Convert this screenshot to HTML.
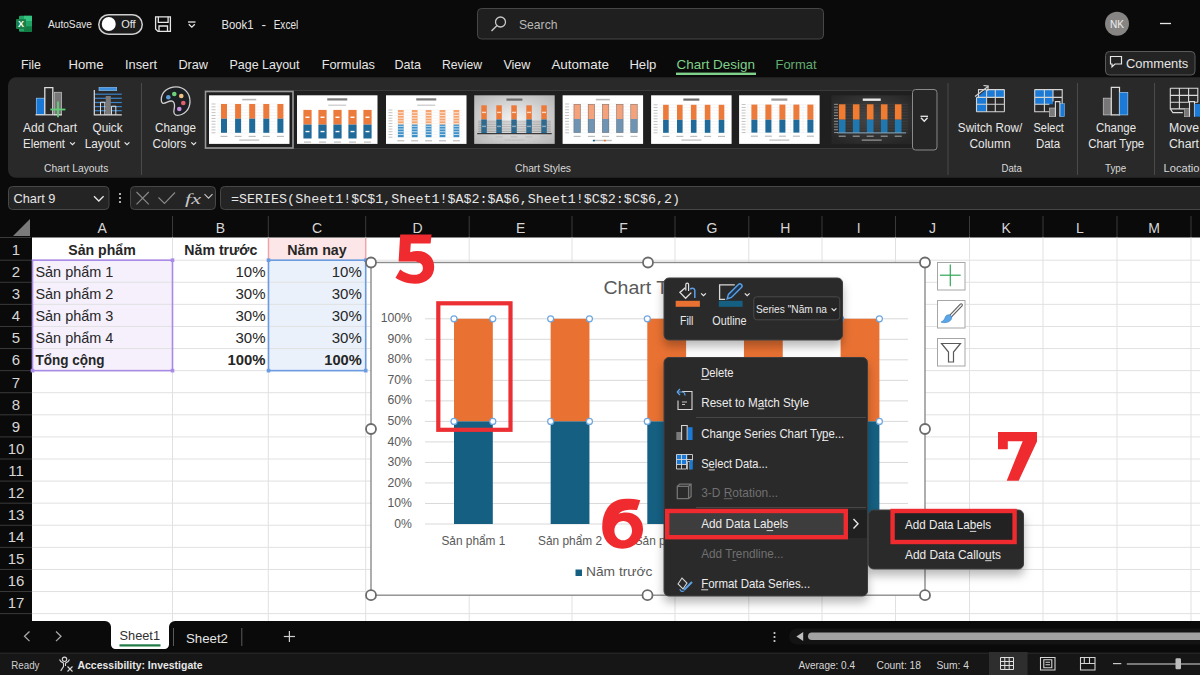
<!DOCTYPE html>
<html><head><meta charset="utf-8"><title>Excel</title>
<style>html,body{margin:0;padding:0;width:1200px;height:675px;overflow:hidden;background:#0a0a0a}svg{display:block;font-family:"Liberation Sans",sans-serif}</style>
</head><body>
<svg width="1200" height="675" viewBox="0 0 1200 675">
<defs>
<radialGradient id="gd" cx="0.5" cy="0.45" r="0.65"><stop offset="0" stop-color="#454545"/><stop offset="1" stop-color="#262626"/></radialGradient>
<radialGradient id="gg" cx="0.5" cy="0.5" r="0.7"><stop offset="0" stop-color="#f4f4f4"/><stop offset="1" stop-color="#b4b4b4"/></radialGradient>
<filter id="sh" x="-20%" y="-20%" width="140%" height="150%"><feDropShadow dx="0" dy="6" stdDeviation="5" flood-color="#000" flood-opacity="0.28"/></filter>
</defs>
<rect x="0" y="0" width="1200" height="675" fill="#0a0a0a"/>
<rect x="19" y="15.8" width="13" height="16" fill="#21a366" rx="1.2"/>
<rect x="24" y="15.8" width="8" height="5.3" fill="#33c481"/>
<rect x="24" y="21.1" width="8" height="5.3" fill="#21a366"/>
<rect x="24" y="26.4" width="8" height="5.4" fill="#107c41"/>
<rect x="16" y="18.9" width="10" height="10" fill="#1b8048" rx="1"/>
<text x="21" y="27.2" font-size="9.5" fill="#ffffff" font-weight="bold" text-anchor="middle" textLength="6" lengthAdjust="spacingAndGlyphs">X</text>
<text x="48" y="28" font-size="10" fill="#e6e6e6" textLength="44" lengthAdjust="spacingAndGlyphs">AutoSave</text>
<rect x="98.75" y="14.75" width="43.5" height="19.5" fill="#1a1a1a" rx="9.75" stroke="#cfcfcf" stroke-width="1.5"/>
<circle cx="108.75" cy="24" r="7" fill="#ffffff"/>
<text x="121.2" y="28" font-size="11" fill="#e6e6e6" textLength="14.5" lengthAdjust="spacingAndGlyphs">Off</text>
<path d="M155.6,16.8 h14.8 v14.6 h-12.4 l-2.4,-2.4 z" fill="none" stroke="#e6e6e6" stroke-width="1.3"/>
<path d="M158.3,16.8 v5.6 h9.8 v-5.6" fill="none" stroke="#e6e6e6" stroke-width="1.3"/>
<path d="M159,31.4 v-5.4 h8.5 v5.4" fill="none" stroke="#e6e6e6" stroke-width="1.3"/>
<line x1="188" y1="22" x2="195.5" y2="22" stroke="#e6e6e6" stroke-width="1.3"/>
<path d="M188.8,24.3 l3,2.9 l3,-2.9" fill="none" stroke="#e6e6e6" stroke-width="1.3"/>
<text x="221.5" y="28.7" font-size="12.5" fill="#e6e6e6" textLength="32" lengthAdjust="spacingAndGlyphs">Book1</text>
<text x="261.5" y="28.7" font-size="12.5" fill="#e6e6e6" textLength="4.5" lengthAdjust="spacingAndGlyphs">-</text>
<text x="273.7" y="28.7" font-size="12.5" fill="#e6e6e6" textLength="24.5" lengthAdjust="spacingAndGlyphs">Excel</text>
<rect x="477.5" y="8.5" width="346" height="30.5" fill="#1f1f1f" rx="4" stroke="#474747" stroke-width="1"/>
<circle cx="500.5" cy="22" r="5" fill="none" stroke="#c8c8c8" stroke-width="1.3"/>
<line x1="496.8" y1="25.8" x2="491.5" y2="31" stroke="#c8c8c8" stroke-width="1.4"/>
<text x="519" y="29.3" font-size="13" fill="#b8b8b8" textLength="38.5" lengthAdjust="spacingAndGlyphs">Search</text>
<circle cx="1117" cy="23.7" r="12" fill="#878584"/>
<text x="1117" y="27.6" font-size="10" fill="#eeeeee" text-anchor="middle" textLength="14" lengthAdjust="spacingAndGlyphs">NK</text>
<line x1="1160" y1="23.5" x2="1171" y2="23.5" stroke="#e6e6e6" stroke-width="1.3"/>
<text x="21" y="68.8" font-size="13.5" fill="#e6e6e6" textLength="20" lengthAdjust="spacingAndGlyphs">File</text>
<text x="68.6" y="68.8" font-size="13.5" fill="#e6e6e6" textLength="35" lengthAdjust="spacingAndGlyphs">Home</text>
<text x="125" y="68.8" font-size="13.5" fill="#e6e6e6" textLength="32" lengthAdjust="spacingAndGlyphs">Insert</text>
<text x="178.4" y="68.8" font-size="13.5" fill="#e6e6e6" textLength="29.6" lengthAdjust="spacingAndGlyphs">Draw</text>
<text x="229.5" y="68.8" font-size="13.5" fill="#e6e6e6" textLength="70" lengthAdjust="spacingAndGlyphs">Page Layout</text>
<text x="321.7" y="68.8" font-size="13.5" fill="#e6e6e6" textLength="53.3" lengthAdjust="spacingAndGlyphs">Formulas</text>
<text x="394.5" y="68.8" font-size="13.5" fill="#e6e6e6" textLength="26.5" lengthAdjust="spacingAndGlyphs">Data</text>
<text x="442" y="68.8" font-size="13.5" fill="#e6e6e6" textLength="40" lengthAdjust="spacingAndGlyphs">Review</text>
<text x="503.4" y="68.8" font-size="13.5" fill="#e6e6e6" textLength="27" lengthAdjust="spacingAndGlyphs">View</text>
<text x="551.4" y="68.8" font-size="13.5" fill="#e6e6e6" textLength="57.6" lengthAdjust="spacingAndGlyphs">Automate</text>
<text x="629.4" y="68.8" font-size="13.5" fill="#e6e6e6" textLength="27" lengthAdjust="spacingAndGlyphs">Help</text>
<text x="676.5" y="68.8" font-size="13.5" fill="#7fd18b" textLength="78.5" lengthAdjust="spacingAndGlyphs">Chart Design</text>
<rect x="676" y="72.6" width="80" height="2.4" fill="#7fd18b"/>
<text x="775.5" y="68.8" font-size="13.5" fill="#62ad71" textLength="41" lengthAdjust="spacingAndGlyphs">Format</text>
<rect x="1105.5" y="51.5" width="89.5" height="23.5" fill="#232323" rx="4" stroke="#5a5a5a" stroke-width="1"/>
<path d="M1110.5,56.5 h11 v7.5 h-6.5 l-3,2.8 v-2.8 h-1.5 z" fill="none" stroke="#e6e6e6" stroke-width="1.2"/>
<text x="1126" y="68" font-size="13" fill="#e6e6e6" textLength="62.3" lengthAdjust="spacingAndGlyphs">Comments</text>
<rect x="8" y="77.3" width="1230" height="100.5" fill="#292929" rx="8"/>
<rect x="36.3" y="98.2" width="8.2" height="16.5" fill="#1778d8" stroke="#9cc8f0" stroke-width="0.7"/>
<path d="M44.8,114.8 v-27.2 h8 v27.2" fill="none" stroke="#dcdcdc" stroke-width="1.3"/>
<rect x="54.3" y="92.3" width="7.2" height="22.5" fill="#777777" stroke="#bdbdbd" stroke-width="0.8"/>
<line x1="35.5" y1="114.8" x2="62" y2="114.8" stroke="#dcdcdc" stroke-width="1.2"/>
<line x1="50.3" y1="109.5" x2="65.4" y2="109.5" stroke="#5fcf75" stroke-width="1.8"/>
<line x1="58" y1="101.6" x2="58" y2="117.2" stroke="#5fcf75" stroke-width="1.8"/>
<text x="50" y="132" font-size="12.5" fill="#e8e8e8" text-anchor="middle" textLength="54" lengthAdjust="spacingAndGlyphs">Add Chart</text>
<text x="23" y="148" font-size="12.5" fill="#e8e8e8" textLength="42" lengthAdjust="spacingAndGlyphs">Element</text>
<path d="M70.1,142.3 l2.4,2.4 l2.4,-2.4" fill="none" stroke="#e8e8e8" stroke-width="1.2"/>
<rect x="99" y="87.3" width="17.7" height="3.4" fill="#3f8fe0" stroke="#8cc0f0" stroke-width="0.6"/>
<line x1="94.3" y1="94.2" x2="121.8" y2="94.2" stroke="#3d85cc" stroke-width="1.2"/>
<line x1="94.3" y1="98.3" x2="121.8" y2="98.3" stroke="#3d85cc" stroke-width="1.2"/>
<line x1="94.3" y1="102.5" x2="121.8" y2="102.5" stroke="#3d85cc" stroke-width="1.2"/>
<line x1="94.3" y1="106.6" x2="121.8" y2="106.6" stroke="#3d85cc" stroke-width="1.2"/>
<line x1="94.3" y1="110.7" x2="121.8" y2="110.7" stroke="#3d85cc" stroke-width="1.2"/>
<rect x="105.7" y="96" width="5.1" height="18.9" fill="#7a7a7a"/>
<path d="M100.5,114.9 v-12.7 h4.3 v12.7 M111.5,114.9 v-8.7 h4.3 v8.7" fill="none" stroke="#dcdcdc" stroke-width="1"/>
<path d="M94.3,90 v24.9 h27.5" fill="none" stroke="#dcdcdc" stroke-width="1.2"/>
<text x="107.5" y="132" font-size="12.5" fill="#e8e8e8" text-anchor="middle" textLength="30" lengthAdjust="spacingAndGlyphs">Quick</text>
<text x="84.7" y="148" font-size="12.5" fill="#e8e8e8" textLength="35.3" lengthAdjust="spacingAndGlyphs">Layout</text>
<path d="M124.6,142.3 l2.4,2.4 l2.4,-2.4" fill="none" stroke="#e8e8e8" stroke-width="1.2"/>
<text x="76.2" y="171.5" font-size="11" fill="#d8d8d8" text-anchor="middle" textLength="64.3" lengthAdjust="spacingAndGlyphs">Chart Layouts</text>
<line x1="141.5" y1="83" x2="141.5" y2="175" stroke="#4a4a4a" stroke-width="1"/>
<path d="M176,86.8 C184.5,86.8 190,93.5 190,101.5 C190,109.5 184,115.3 177.5,115.3 C174.5,115.3 173.3,113 174,110 C174.8,106.5 175.5,103.5 173,101.5 C170,99.5 166.5,103.3 163.5,103.3 C161.8,103.3 161.3,101.5 161.3,99.5 C161.3,92.5 167.5,86.8 176,86.8 Z" fill="#1c1f24" stroke="#d0d0d0" stroke-width="1.3"/>
<circle cx="168.3" cy="97.3" r="2.3" fill="#5b9bd5"/>
<circle cx="174.3" cy="94" r="2.3" fill="#6fd07a"/>
<circle cx="181.3" cy="96" r="2.3" fill="#f0c080"/>
<circle cx="183.3" cy="103" r="2.3" fill="#e06070"/>
<circle cx="179.3" cy="109" r="2.3" fill="#c890e0"/>
<text x="175.5" y="132" font-size="12.5" fill="#e8e8e8" text-anchor="middle" textLength="40.8" lengthAdjust="spacingAndGlyphs">Change</text>
<text x="152.5" y="148" font-size="12.5" fill="#e8e8e8" textLength="33.8" lengthAdjust="spacingAndGlyphs">Colors</text>
<path d="M191.29999999999998,142.3 l2.4,2.4 l2.4,-2.4" fill="none" stroke="#e8e8e8" stroke-width="1.2"/>
<text x="543" y="171.5" font-size="11" fill="#d8d8d8" text-anchor="middle" textLength="56" lengthAdjust="spacingAndGlyphs">Chart Styles</text>
<line x1="948" y1="83" x2="948" y2="175" stroke="#4a4a4a" stroke-width="1"/>
<rect x="204.5" y="90.5" width="733" height="58" fill="#1f1f1f"/>
<line x1="204.5" y1="90.5" x2="912" y2="90.5" stroke="#3a3a3a" stroke-width="1"/>
<line x1="204.5" y1="148.5" x2="912" y2="148.5" stroke="#3a3a3a" stroke-width="1"/>
<rect x="209" y="95.3" width="80.5" height="48.6" fill="#ffffff"/>
<rect x="242.25" y="98.8" width="14" height="1.6" fill="#b8b8b8"/>
<line x1="217" y1="104.0" x2="285.5" y2="104.0" stroke="#ececec" stroke-width="0.5"/>
<rect x="211.5" y="103.55" width="4" height="0.9" fill="#bdbdbd"/>
<line x1="217" y1="106.88" x2="285.5" y2="106.88" stroke="#ececec" stroke-width="0.5"/>
<rect x="211.5" y="106.42999999999999" width="4" height="0.9" fill="#bdbdbd"/>
<line x1="217" y1="109.76" x2="285.5" y2="109.76" stroke="#ececec" stroke-width="0.5"/>
<rect x="211.5" y="109.31" width="4" height="0.9" fill="#bdbdbd"/>
<line x1="217" y1="112.64" x2="285.5" y2="112.64" stroke="#ececec" stroke-width="0.5"/>
<rect x="211.5" y="112.19" width="4" height="0.9" fill="#bdbdbd"/>
<line x1="217" y1="115.52000000000001" x2="285.5" y2="115.52000000000001" stroke="#ececec" stroke-width="0.5"/>
<rect x="211.5" y="115.07000000000001" width="4" height="0.9" fill="#bdbdbd"/>
<line x1="217" y1="118.4" x2="285.5" y2="118.4" stroke="#ececec" stroke-width="0.5"/>
<rect x="211.5" y="117.95" width="4" height="0.9" fill="#bdbdbd"/>
<line x1="217" y1="121.28" x2="285.5" y2="121.28" stroke="#ececec" stroke-width="0.5"/>
<rect x="211.5" y="120.83" width="4" height="0.9" fill="#bdbdbd"/>
<line x1="217" y1="124.16000000000001" x2="285.5" y2="124.16000000000001" stroke="#ececec" stroke-width="0.5"/>
<rect x="211.5" y="123.71000000000001" width="4" height="0.9" fill="#bdbdbd"/>
<line x1="217" y1="127.04" x2="285.5" y2="127.04" stroke="#ececec" stroke-width="0.5"/>
<rect x="211.5" y="126.59" width="4" height="0.9" fill="#bdbdbd"/>
<line x1="217" y1="129.92000000000002" x2="285.5" y2="129.92000000000002" stroke="#ececec" stroke-width="0.5"/>
<rect x="211.5" y="129.47000000000003" width="4" height="0.9" fill="#bdbdbd"/>
<line x1="217" y1="132.8" x2="285.5" y2="132.8" stroke="#ececec" stroke-width="0.5"/>
<rect x="211.5" y="132.35000000000002" width="4" height="0.9" fill="#bdbdbd"/>
<rect x="221.0" y="104" width="6" height="14.700000000000003" fill="#ec7a3a"/>
<rect x="221.0" y="118.7" width="6" height="14.100000000000009" fill="#1f6a98"/>
<rect x="220.5" y="135.8" width="7" height="1.2" fill="#bdbdbd"/>
<rect x="235.1" y="104" width="6" height="14.700000000000003" fill="#ec7a3a"/>
<rect x="235.1" y="118.7" width="6" height="14.100000000000009" fill="#1f6a98"/>
<rect x="234.6" y="135.8" width="7" height="1.2" fill="#bdbdbd"/>
<rect x="249.2" y="104" width="6" height="14.700000000000003" fill="#ec7a3a"/>
<rect x="249.2" y="118.7" width="6" height="14.100000000000009" fill="#1f6a98"/>
<rect x="248.7" y="135.8" width="7" height="1.2" fill="#bdbdbd"/>
<rect x="263.3" y="104" width="6" height="14.700000000000003" fill="#ec7a3a"/>
<rect x="263.3" y="118.7" width="6" height="14.100000000000009" fill="#1f6a98"/>
<rect x="262.8" y="135.8" width="7" height="1.2" fill="#bdbdbd"/>
<rect x="277.4" y="104" width="6" height="14.700000000000003" fill="#ec7a3a"/>
<rect x="277.4" y="118.7" width="6" height="14.100000000000009" fill="#1f6a98"/>
<rect x="276.9" y="135.8" width="7" height="1.2" fill="#bdbdbd"/>
<rect x="239.25" y="139.5" width="20" height="1.2" fill="#bdbdbd"/>
<rect x="297" y="95.3" width="80.5" height="48.6" fill="#ffffff"/>
<rect x="327.25" y="98.3" width="20" height="2.2" fill="#7a7a7a"/>
<rect x="328.25" y="104.6" width="18" height="1.2" fill="#c8c8c8"/>
<rect x="303.4" y="109.9" width="8.2" height="14.699999999999989" fill="#ec7a3a"/>
<rect x="303.4" y="124.6" width="8.2" height="13.900000000000006" fill="#1f6a98"/>
<rect x="305.5" y="116.55" width="4" height="1.4" fill="#ffffff"/>
<rect x="305.5" y="130.85000000000002" width="4" height="1.4" fill="#ffffff"/>
<rect x="304.0" y="141.5" width="7" height="1.2" fill="#bdbdbd"/>
<rect x="318.4" y="109.9" width="8.2" height="14.699999999999989" fill="#ec7a3a"/>
<rect x="318.4" y="124.6" width="8.2" height="13.900000000000006" fill="#1f6a98"/>
<rect x="320.5" y="116.55" width="4" height="1.4" fill="#ffffff"/>
<rect x="320.5" y="130.85000000000002" width="4" height="1.4" fill="#ffffff"/>
<rect x="319.0" y="141.5" width="7" height="1.2" fill="#bdbdbd"/>
<rect x="333.4" y="109.9" width="8.2" height="14.699999999999989" fill="#ec7a3a"/>
<rect x="333.4" y="124.6" width="8.2" height="13.900000000000006" fill="#1f6a98"/>
<rect x="335.5" y="116.55" width="4" height="1.4" fill="#ffffff"/>
<rect x="335.5" y="130.85000000000002" width="4" height="1.4" fill="#ffffff"/>
<rect x="334.0" y="141.5" width="7" height="1.2" fill="#bdbdbd"/>
<rect x="348.4" y="109.9" width="8.2" height="14.699999999999989" fill="#ec7a3a"/>
<rect x="348.4" y="124.6" width="8.2" height="13.900000000000006" fill="#1f6a98"/>
<rect x="350.5" y="116.55" width="4" height="1.4" fill="#ffffff"/>
<rect x="350.5" y="130.85000000000002" width="4" height="1.4" fill="#ffffff"/>
<rect x="349.0" y="141.5" width="7" height="1.2" fill="#bdbdbd"/>
<rect x="363.4" y="109.9" width="8.2" height="14.699999999999989" fill="#ec7a3a"/>
<rect x="363.4" y="124.6" width="8.2" height="13.900000000000006" fill="#1f6a98"/>
<rect x="365.5" y="116.55" width="4" height="1.4" fill="#ffffff"/>
<rect x="365.5" y="130.85000000000002" width="4" height="1.4" fill="#ffffff"/>
<rect x="364.0" y="141.5" width="7" height="1.2" fill="#bdbdbd"/>
<rect x="386" y="95.3" width="80.5" height="48.6" fill="#ffffff"/>
<rect x="416.25" y="98.3" width="20" height="2.2" fill="#7a7a7a"/>
<rect x="417.25" y="104.6" width="18" height="1.2" fill="#c8c8c8"/>
<line x1="394" y1="110.0" x2="462.5" y2="110.0" stroke="#ececec" stroke-width="0.5"/>
<rect x="388.5" y="109.55" width="4" height="0.9" fill="#bdbdbd"/>
<line x1="394" y1="112.72" x2="462.5" y2="112.72" stroke="#ececec" stroke-width="0.5"/>
<rect x="388.5" y="112.27" width="4" height="0.9" fill="#bdbdbd"/>
<line x1="394" y1="115.44" x2="462.5" y2="115.44" stroke="#ececec" stroke-width="0.5"/>
<rect x="388.5" y="114.99" width="4" height="0.9" fill="#bdbdbd"/>
<line x1="394" y1="118.16" x2="462.5" y2="118.16" stroke="#ececec" stroke-width="0.5"/>
<rect x="388.5" y="117.71" width="4" height="0.9" fill="#bdbdbd"/>
<line x1="394" y1="120.88" x2="462.5" y2="120.88" stroke="#ececec" stroke-width="0.5"/>
<rect x="388.5" y="120.42999999999999" width="4" height="0.9" fill="#bdbdbd"/>
<line x1="394" y1="123.6" x2="462.5" y2="123.6" stroke="#ececec" stroke-width="0.5"/>
<rect x="388.5" y="123.14999999999999" width="4" height="0.9" fill="#bdbdbd"/>
<line x1="394" y1="126.32" x2="462.5" y2="126.32" stroke="#ececec" stroke-width="0.5"/>
<rect x="388.5" y="125.86999999999999" width="4" height="0.9" fill="#bdbdbd"/>
<line x1="394" y1="129.04" x2="462.5" y2="129.04" stroke="#ececec" stroke-width="0.5"/>
<rect x="388.5" y="128.59" width="4" height="0.9" fill="#bdbdbd"/>
<line x1="394" y1="131.76" x2="462.5" y2="131.76" stroke="#ececec" stroke-width="0.5"/>
<rect x="388.5" y="131.31" width="4" height="0.9" fill="#bdbdbd"/>
<line x1="394" y1="134.48" x2="462.5" y2="134.48" stroke="#ececec" stroke-width="0.5"/>
<rect x="388.5" y="134.03" width="4" height="0.9" fill="#bdbdbd"/>
<line x1="394" y1="137.2" x2="462.5" y2="137.2" stroke="#ececec" stroke-width="0.5"/>
<rect x="388.5" y="136.75" width="4" height="0.9" fill="#bdbdbd"/>
<rect x="397.9" y="110" width="5.8" height="14.599999999999994" fill="#f5a46f"/>
<rect x="397.9" y="124.6" width="5.8" height="12.599999999999994" fill="#3d90c8"/>
<line x1="397.9" y1="112.72" x2="403.7" y2="112.72" stroke="#ffffff" stroke-width="0.7"/>
<line x1="397.9" y1="115.44" x2="403.7" y2="115.44" stroke="#ffffff" stroke-width="0.7"/>
<line x1="397.9" y1="118.16" x2="403.7" y2="118.16" stroke="#ffffff" stroke-width="0.7"/>
<line x1="397.9" y1="120.88" x2="403.7" y2="120.88" stroke="#ffffff" stroke-width="0.7"/>
<line x1="397.9" y1="123.6" x2="403.7" y2="123.6" stroke="#ffffff" stroke-width="0.7"/>
<line x1="397.9" y1="126.32" x2="403.7" y2="126.32" stroke="#ffffff" stroke-width="0.7"/>
<line x1="397.9" y1="129.04" x2="403.7" y2="129.04" stroke="#ffffff" stroke-width="0.7"/>
<line x1="397.9" y1="131.76" x2="403.7" y2="131.76" stroke="#ffffff" stroke-width="0.7"/>
<line x1="397.9" y1="134.48" x2="403.7" y2="134.48" stroke="#ffffff" stroke-width="0.7"/>
<rect x="397.29999999999995" y="140.2" width="7" height="1.2" fill="#bdbdbd"/>
<rect x="411.79999999999995" y="110" width="5.8" height="14.599999999999994" fill="#f5a46f"/>
<rect x="411.79999999999995" y="124.6" width="5.8" height="12.599999999999994" fill="#3d90c8"/>
<line x1="411.79999999999995" y1="112.72" x2="417.59999999999997" y2="112.72" stroke="#ffffff" stroke-width="0.7"/>
<line x1="411.79999999999995" y1="115.44" x2="417.59999999999997" y2="115.44" stroke="#ffffff" stroke-width="0.7"/>
<line x1="411.79999999999995" y1="118.16" x2="417.59999999999997" y2="118.16" stroke="#ffffff" stroke-width="0.7"/>
<line x1="411.79999999999995" y1="120.88" x2="417.59999999999997" y2="120.88" stroke="#ffffff" stroke-width="0.7"/>
<line x1="411.79999999999995" y1="123.6" x2="417.59999999999997" y2="123.6" stroke="#ffffff" stroke-width="0.7"/>
<line x1="411.79999999999995" y1="126.32" x2="417.59999999999997" y2="126.32" stroke="#ffffff" stroke-width="0.7"/>
<line x1="411.79999999999995" y1="129.04" x2="417.59999999999997" y2="129.04" stroke="#ffffff" stroke-width="0.7"/>
<line x1="411.79999999999995" y1="131.76" x2="417.59999999999997" y2="131.76" stroke="#ffffff" stroke-width="0.7"/>
<line x1="411.79999999999995" y1="134.48" x2="417.59999999999997" y2="134.48" stroke="#ffffff" stroke-width="0.7"/>
<rect x="411.19999999999993" y="140.2" width="7" height="1.2" fill="#bdbdbd"/>
<rect x="425.7" y="110" width="5.8" height="14.599999999999994" fill="#f5a46f"/>
<rect x="425.7" y="124.6" width="5.8" height="12.599999999999994" fill="#3d90c8"/>
<line x1="425.7" y1="112.72" x2="431.5" y2="112.72" stroke="#ffffff" stroke-width="0.7"/>
<line x1="425.7" y1="115.44" x2="431.5" y2="115.44" stroke="#ffffff" stroke-width="0.7"/>
<line x1="425.7" y1="118.16" x2="431.5" y2="118.16" stroke="#ffffff" stroke-width="0.7"/>
<line x1="425.7" y1="120.88" x2="431.5" y2="120.88" stroke="#ffffff" stroke-width="0.7"/>
<line x1="425.7" y1="123.6" x2="431.5" y2="123.6" stroke="#ffffff" stroke-width="0.7"/>
<line x1="425.7" y1="126.32" x2="431.5" y2="126.32" stroke="#ffffff" stroke-width="0.7"/>
<line x1="425.7" y1="129.04" x2="431.5" y2="129.04" stroke="#ffffff" stroke-width="0.7"/>
<line x1="425.7" y1="131.76" x2="431.5" y2="131.76" stroke="#ffffff" stroke-width="0.7"/>
<line x1="425.7" y1="134.48" x2="431.5" y2="134.48" stroke="#ffffff" stroke-width="0.7"/>
<rect x="425.09999999999997" y="140.2" width="7" height="1.2" fill="#bdbdbd"/>
<rect x="439.59999999999997" y="110" width="5.8" height="14.599999999999994" fill="#f5a46f"/>
<rect x="439.59999999999997" y="124.6" width="5.8" height="12.599999999999994" fill="#3d90c8"/>
<line x1="439.59999999999997" y1="112.72" x2="445.4" y2="112.72" stroke="#ffffff" stroke-width="0.7"/>
<line x1="439.59999999999997" y1="115.44" x2="445.4" y2="115.44" stroke="#ffffff" stroke-width="0.7"/>
<line x1="439.59999999999997" y1="118.16" x2="445.4" y2="118.16" stroke="#ffffff" stroke-width="0.7"/>
<line x1="439.59999999999997" y1="120.88" x2="445.4" y2="120.88" stroke="#ffffff" stroke-width="0.7"/>
<line x1="439.59999999999997" y1="123.6" x2="445.4" y2="123.6" stroke="#ffffff" stroke-width="0.7"/>
<line x1="439.59999999999997" y1="126.32" x2="445.4" y2="126.32" stroke="#ffffff" stroke-width="0.7"/>
<line x1="439.59999999999997" y1="129.04" x2="445.4" y2="129.04" stroke="#ffffff" stroke-width="0.7"/>
<line x1="439.59999999999997" y1="131.76" x2="445.4" y2="131.76" stroke="#ffffff" stroke-width="0.7"/>
<line x1="439.59999999999997" y1="134.48" x2="445.4" y2="134.48" stroke="#ffffff" stroke-width="0.7"/>
<rect x="438.99999999999994" y="140.2" width="7" height="1.2" fill="#bdbdbd"/>
<rect x="453.5" y="110" width="5.8" height="14.599999999999994" fill="#f5a46f"/>
<rect x="453.5" y="124.6" width="5.8" height="12.599999999999994" fill="#3d90c8"/>
<line x1="453.5" y1="112.72" x2="459.3" y2="112.72" stroke="#ffffff" stroke-width="0.7"/>
<line x1="453.5" y1="115.44" x2="459.3" y2="115.44" stroke="#ffffff" stroke-width="0.7"/>
<line x1="453.5" y1="118.16" x2="459.3" y2="118.16" stroke="#ffffff" stroke-width="0.7"/>
<line x1="453.5" y1="120.88" x2="459.3" y2="120.88" stroke="#ffffff" stroke-width="0.7"/>
<line x1="453.5" y1="123.6" x2="459.3" y2="123.6" stroke="#ffffff" stroke-width="0.7"/>
<line x1="453.5" y1="126.32" x2="459.3" y2="126.32" stroke="#ffffff" stroke-width="0.7"/>
<line x1="453.5" y1="129.04" x2="459.3" y2="129.04" stroke="#ffffff" stroke-width="0.7"/>
<line x1="453.5" y1="131.76" x2="459.3" y2="131.76" stroke="#ffffff" stroke-width="0.7"/>
<line x1="453.5" y1="134.48" x2="459.3" y2="134.48" stroke="#ffffff" stroke-width="0.7"/>
<rect x="452.9" y="140.2" width="7" height="1.2" fill="#bdbdbd"/>
<rect x="474.2" y="95.3" width="80.5" height="48.6" fill="url(#gg)"/>
<rect x="506.45000000000005" y="98.5" width="16" height="2.2" fill="#6a6a6a"/>
<rect x="481.3" y="105.3" width="5.5" height="14.200000000000003" fill="#ec7a3a"/>
<rect x="481.3" y="119.5" width="5.5" height="13.800000000000011" fill="#1f6a98"/>
<rect x="482.05" y="111.7" width="4" height="1.4" fill="#f8d8c0"/>
<rect x="482.05" y="125.7" width="4" height="1.4" fill="#a8c8e0"/>
<rect x="480.55" y="136.3" width="7" height="1.2" fill="#bdbdbd"/>
<rect x="496.3" y="105.3" width="5.5" height="14.200000000000003" fill="#ec7a3a"/>
<rect x="496.3" y="119.5" width="5.5" height="13.800000000000011" fill="#1f6a98"/>
<rect x="497.05" y="111.7" width="4" height="1.4" fill="#f8d8c0"/>
<rect x="497.05" y="125.7" width="4" height="1.4" fill="#a8c8e0"/>
<rect x="495.55" y="136.3" width="7" height="1.2" fill="#bdbdbd"/>
<rect x="511.3" y="105.3" width="5.5" height="14.200000000000003" fill="#ec7a3a"/>
<rect x="511.3" y="119.5" width="5.5" height="13.800000000000011" fill="#1f6a98"/>
<rect x="512.05" y="111.7" width="4" height="1.4" fill="#f8d8c0"/>
<rect x="512.05" y="125.7" width="4" height="1.4" fill="#a8c8e0"/>
<rect x="510.54999999999995" y="136.3" width="7" height="1.2" fill="#bdbdbd"/>
<rect x="526.3" y="105.3" width="5.5" height="14.200000000000003" fill="#ec7a3a"/>
<rect x="526.3" y="119.5" width="5.5" height="13.800000000000011" fill="#1f6a98"/>
<rect x="527.05" y="111.7" width="4" height="1.4" fill="#f8d8c0"/>
<rect x="527.05" y="125.7" width="4" height="1.4" fill="#a8c8e0"/>
<rect x="525.55" y="136.3" width="7" height="1.2" fill="#bdbdbd"/>
<rect x="541.3" y="105.3" width="5.5" height="14.200000000000003" fill="#ec7a3a"/>
<rect x="541.3" y="119.5" width="5.5" height="13.800000000000011" fill="#1f6a98"/>
<rect x="542.05" y="111.7" width="4" height="1.4" fill="#f8d8c0"/>
<rect x="542.05" y="125.7" width="4" height="1.4" fill="#a8c8e0"/>
<rect x="540.55" y="136.3" width="7" height="1.2" fill="#bdbdbd"/>
<line x1="478.2" y1="121.225" x2="550.7" y2="121.225" stroke="#6a6a6a" stroke-width="0.4"/>
<line x1="478.2" y1="122.95" x2="550.7" y2="122.95" stroke="#6a6a6a" stroke-width="0.4"/>
<line x1="478.2" y1="124.67500000000001" x2="550.7" y2="124.67500000000001" stroke="#6a6a6a" stroke-width="0.4"/>
<line x1="478.2" y1="126.4" x2="550.7" y2="126.4" stroke="#6a6a6a" stroke-width="0.4"/>
<line x1="478.2" y1="128.125" x2="550.7" y2="128.125" stroke="#6a6a6a" stroke-width="0.4"/>
<line x1="478.2" y1="129.85000000000002" x2="550.7" y2="129.85000000000002" stroke="#6a6a6a" stroke-width="0.4"/>
<line x1="478.2" y1="131.57500000000002" x2="550.7" y2="131.57500000000002" stroke="#6a6a6a" stroke-width="0.4"/>
<line x1="477.2" y1="133.60000000000002" x2="551.7" y2="133.60000000000002" stroke="#3a3a3a" stroke-width="1.2"/>
<rect x="504.45000000000005" y="139.5" width="20" height="1.2" fill="#bdbdbd"/>
<rect x="562.6" y="95.3" width="80.5" height="48.6" fill="#ffffff"/>
<rect x="595.85" y="98.8" width="14" height="1.6" fill="#b8b8b8"/>
<line x1="570.6" y1="104.0" x2="639.1" y2="104.0" stroke="#ececec" stroke-width="0.5"/>
<rect x="565.1" y="103.55" width="4" height="0.9" fill="#bdbdbd"/>
<line x1="570.6" y1="106.88" x2="639.1" y2="106.88" stroke="#ececec" stroke-width="0.5"/>
<rect x="565.1" y="106.42999999999999" width="4" height="0.9" fill="#bdbdbd"/>
<line x1="570.6" y1="109.76" x2="639.1" y2="109.76" stroke="#ececec" stroke-width="0.5"/>
<rect x="565.1" y="109.31" width="4" height="0.9" fill="#bdbdbd"/>
<line x1="570.6" y1="112.64" x2="639.1" y2="112.64" stroke="#ececec" stroke-width="0.5"/>
<rect x="565.1" y="112.19" width="4" height="0.9" fill="#bdbdbd"/>
<line x1="570.6" y1="115.52000000000001" x2="639.1" y2="115.52000000000001" stroke="#ececec" stroke-width="0.5"/>
<rect x="565.1" y="115.07000000000001" width="4" height="0.9" fill="#bdbdbd"/>
<line x1="570.6" y1="118.4" x2="639.1" y2="118.4" stroke="#ececec" stroke-width="0.5"/>
<rect x="565.1" y="117.95" width="4" height="0.9" fill="#bdbdbd"/>
<line x1="570.6" y1="121.28" x2="639.1" y2="121.28" stroke="#ececec" stroke-width="0.5"/>
<rect x="565.1" y="120.83" width="4" height="0.9" fill="#bdbdbd"/>
<line x1="570.6" y1="124.16000000000001" x2="639.1" y2="124.16000000000001" stroke="#ececec" stroke-width="0.5"/>
<rect x="565.1" y="123.71000000000001" width="4" height="0.9" fill="#bdbdbd"/>
<line x1="570.6" y1="127.04" x2="639.1" y2="127.04" stroke="#ececec" stroke-width="0.5"/>
<rect x="565.1" y="126.59" width="4" height="0.9" fill="#bdbdbd"/>
<line x1="570.6" y1="129.92000000000002" x2="639.1" y2="129.92000000000002" stroke="#ececec" stroke-width="0.5"/>
<rect x="565.1" y="129.47000000000003" width="4" height="0.9" fill="#bdbdbd"/>
<line x1="570.6" y1="132.8" x2="639.1" y2="132.8" stroke="#ececec" stroke-width="0.5"/>
<rect x="565.1" y="132.35000000000002" width="4" height="0.9" fill="#bdbdbd"/>
<rect x="573.7" y="104" width="7" height="15" fill="#f3a27c"/>
<rect x="573.7" y="119" width="7" height="13.800000000000011" fill="#6f93b3"/>
<rect x="574.0" y="104.3" width="6.4" height="28.20000000000001" fill="none" stroke="#7a7a7a" stroke-width="0.5"/>
<rect x="573.7" y="135.8" width="7" height="1.2" fill="#bdbdbd"/>
<rect x="587.9000000000001" y="104" width="7" height="15" fill="#f3a27c"/>
<rect x="587.9000000000001" y="119" width="7" height="13.800000000000011" fill="#6f93b3"/>
<rect x="588.2" y="104.3" width="6.4" height="28.20000000000001" fill="none" stroke="#7a7a7a" stroke-width="0.5"/>
<rect x="587.9000000000001" y="135.8" width="7" height="1.2" fill="#bdbdbd"/>
<rect x="602.1" y="104" width="7" height="15" fill="#f3a27c"/>
<rect x="602.1" y="119" width="7" height="13.800000000000011" fill="#6f93b3"/>
<rect x="602.4" y="104.3" width="6.4" height="28.20000000000001" fill="none" stroke="#7a7a7a" stroke-width="0.5"/>
<rect x="602.1" y="135.8" width="7" height="1.2" fill="#bdbdbd"/>
<rect x="616.3000000000001" y="104" width="7" height="15" fill="#f3a27c"/>
<rect x="616.3000000000001" y="119" width="7" height="13.800000000000011" fill="#6f93b3"/>
<rect x="616.6" y="104.3" width="6.4" height="28.20000000000001" fill="none" stroke="#7a7a7a" stroke-width="0.5"/>
<rect x="616.3000000000001" y="135.8" width="7" height="1.2" fill="#bdbdbd"/>
<rect x="630.5" y="104" width="7" height="15" fill="#f3a27c"/>
<rect x="630.5" y="119" width="7" height="13.800000000000011" fill="#6f93b3"/>
<rect x="630.8" y="104.3" width="6.4" height="28.20000000000001" fill="none" stroke="#7a7a7a" stroke-width="0.5"/>
<rect x="630.5" y="135.8" width="7" height="1.2" fill="#bdbdbd"/>
<rect x="593.85" y="139.8" width="18" height="1.4" fill="#c0c0c0"/>
<rect x="592.85" y="139.8" width="2" height="1.6" fill="#156082"/>
<rect x="603.85" y="139.8" width="2" height="1.6" fill="#e97132"/>
<rect x="651.1" y="95.3" width="80.5" height="48.6" fill="#ffffff"/>
<rect x="683.35" y="98.5" width="16" height="2.2" fill="#6a6a6a"/>
<line x1="659.1" y1="104.8" x2="727.6" y2="104.8" stroke="#ececec" stroke-width="0.5"/>
<rect x="653.6" y="104.35" width="4" height="0.9" fill="#bdbdbd"/>
<line x1="659.1" y1="107.6" x2="727.6" y2="107.6" stroke="#ececec" stroke-width="0.5"/>
<rect x="653.6" y="107.14999999999999" width="4" height="0.9" fill="#bdbdbd"/>
<line x1="659.1" y1="110.4" x2="727.6" y2="110.4" stroke="#ececec" stroke-width="0.5"/>
<rect x="653.6" y="109.95" width="4" height="0.9" fill="#bdbdbd"/>
<line x1="659.1" y1="113.2" x2="727.6" y2="113.2" stroke="#ececec" stroke-width="0.5"/>
<rect x="653.6" y="112.75" width="4" height="0.9" fill="#bdbdbd"/>
<line x1="659.1" y1="116.0" x2="727.6" y2="116.0" stroke="#ececec" stroke-width="0.5"/>
<rect x="653.6" y="115.55" width="4" height="0.9" fill="#bdbdbd"/>
<line x1="659.1" y1="118.8" x2="727.6" y2="118.8" stroke="#ececec" stroke-width="0.5"/>
<rect x="653.6" y="118.35" width="4" height="0.9" fill="#bdbdbd"/>
<line x1="659.1" y1="121.60000000000001" x2="727.6" y2="121.60000000000001" stroke="#ececec" stroke-width="0.5"/>
<rect x="653.6" y="121.15" width="4" height="0.9" fill="#bdbdbd"/>
<line x1="659.1" y1="124.4" x2="727.6" y2="124.4" stroke="#ececec" stroke-width="0.5"/>
<rect x="653.6" y="123.95" width="4" height="0.9" fill="#bdbdbd"/>
<line x1="659.1" y1="127.20000000000002" x2="727.6" y2="127.20000000000002" stroke="#ececec" stroke-width="0.5"/>
<rect x="653.6" y="126.75000000000001" width="4" height="0.9" fill="#bdbdbd"/>
<line x1="659.1" y1="130.0" x2="727.6" y2="130.0" stroke="#ececec" stroke-width="0.5"/>
<rect x="653.6" y="129.55" width="4" height="0.9" fill="#bdbdbd"/>
<line x1="659.1" y1="132.8" x2="727.6" y2="132.8" stroke="#ececec" stroke-width="0.5"/>
<rect x="653.6" y="132.35000000000002" width="4" height="0.9" fill="#bdbdbd"/>
<rect x="663.1" y="104.8" width="5.6" height="15.0" fill="#ec7a3a"/>
<rect x="663.1" y="119.8" width="5.6" height="13.000000000000014" fill="#1f6a98"/>
<rect x="662.4" y="135.8" width="7" height="1.2" fill="#bdbdbd"/>
<rect x="677.0" y="104.8" width="5.6" height="15.0" fill="#ec7a3a"/>
<rect x="677.0" y="119.8" width="5.6" height="13.000000000000014" fill="#1f6a98"/>
<rect x="676.3" y="135.8" width="7" height="1.2" fill="#bdbdbd"/>
<rect x="690.9" y="104.8" width="5.6" height="15.0" fill="#ec7a3a"/>
<rect x="690.9" y="119.8" width="5.6" height="13.000000000000014" fill="#1f6a98"/>
<rect x="690.1999999999999" y="135.8" width="7" height="1.2" fill="#bdbdbd"/>
<rect x="704.8000000000001" y="104.8" width="5.6" height="15.0" fill="#ec7a3a"/>
<rect x="704.8000000000001" y="119.8" width="5.6" height="13.000000000000014" fill="#1f6a98"/>
<rect x="704.1" y="135.8" width="7" height="1.2" fill="#bdbdbd"/>
<rect x="718.7" y="104.8" width="5.6" height="15.0" fill="#ec7a3a"/>
<rect x="718.7" y="119.8" width="5.6" height="13.000000000000014" fill="#1f6a98"/>
<rect x="718.0" y="135.8" width="7" height="1.2" fill="#bdbdbd"/>
<rect x="681.35" y="139.5" width="20" height="1.2" fill="#bdbdbd"/>
<rect x="739.1" y="95.3" width="80.5" height="48.6" fill="#ffffff"/>
<rect x="771.35" y="98.5" width="16" height="2.2" fill="#9a9a9a"/>
<line x1="747.1" y1="104.6" x2="815.6" y2="104.6" stroke="#ececec" stroke-width="0.5"/>
<rect x="741.6" y="104.14999999999999" width="4" height="0.9" fill="#bdbdbd"/>
<line x1="747.1" y1="107.39999999999999" x2="815.6" y2="107.39999999999999" stroke="#ececec" stroke-width="0.5"/>
<rect x="741.6" y="106.94999999999999" width="4" height="0.9" fill="#bdbdbd"/>
<line x1="747.1" y1="110.19999999999999" x2="815.6" y2="110.19999999999999" stroke="#ececec" stroke-width="0.5"/>
<rect x="741.6" y="109.74999999999999" width="4" height="0.9" fill="#bdbdbd"/>
<line x1="747.1" y1="113.0" x2="815.6" y2="113.0" stroke="#ececec" stroke-width="0.5"/>
<rect x="741.6" y="112.55" width="4" height="0.9" fill="#bdbdbd"/>
<line x1="747.1" y1="115.8" x2="815.6" y2="115.8" stroke="#ececec" stroke-width="0.5"/>
<rect x="741.6" y="115.35" width="4" height="0.9" fill="#bdbdbd"/>
<line x1="747.1" y1="118.6" x2="815.6" y2="118.6" stroke="#ececec" stroke-width="0.5"/>
<rect x="741.6" y="118.14999999999999" width="4" height="0.9" fill="#bdbdbd"/>
<line x1="747.1" y1="121.39999999999999" x2="815.6" y2="121.39999999999999" stroke="#ececec" stroke-width="0.5"/>
<rect x="741.6" y="120.94999999999999" width="4" height="0.9" fill="#bdbdbd"/>
<line x1="747.1" y1="124.19999999999999" x2="815.6" y2="124.19999999999999" stroke="#ececec" stroke-width="0.5"/>
<rect x="741.6" y="123.74999999999999" width="4" height="0.9" fill="#bdbdbd"/>
<line x1="747.1" y1="127.0" x2="815.6" y2="127.0" stroke="#ececec" stroke-width="0.5"/>
<rect x="741.6" y="126.55" width="4" height="0.9" fill="#bdbdbd"/>
<line x1="747.1" y1="129.79999999999998" x2="815.6" y2="129.79999999999998" stroke="#ececec" stroke-width="0.5"/>
<rect x="741.6" y="129.35" width="4" height="0.9" fill="#bdbdbd"/>
<line x1="747.1" y1="132.6" x2="815.6" y2="132.6" stroke="#ececec" stroke-width="0.5"/>
<rect x="741.6" y="132.15" width="4" height="0.9" fill="#bdbdbd"/>
<line x1="747.1" y1="104.6" x2="747.1" y2="132.6" stroke="#eeeeee" stroke-width="0.5"/>
<line x1="753.3000000000001" y1="104.6" x2="753.3000000000001" y2="132.6" stroke="#eeeeee" stroke-width="0.5"/>
<line x1="759.5" y1="104.6" x2="759.5" y2="132.6" stroke="#eeeeee" stroke-width="0.5"/>
<line x1="765.7" y1="104.6" x2="765.7" y2="132.6" stroke="#eeeeee" stroke-width="0.5"/>
<line x1="771.9" y1="104.6" x2="771.9" y2="132.6" stroke="#eeeeee" stroke-width="0.5"/>
<line x1="778.1" y1="104.6" x2="778.1" y2="132.6" stroke="#eeeeee" stroke-width="0.5"/>
<line x1="784.3000000000001" y1="104.6" x2="784.3000000000001" y2="132.6" stroke="#eeeeee" stroke-width="0.5"/>
<line x1="790.5" y1="104.6" x2="790.5" y2="132.6" stroke="#eeeeee" stroke-width="0.5"/>
<line x1="796.7" y1="104.6" x2="796.7" y2="132.6" stroke="#eeeeee" stroke-width="0.5"/>
<line x1="802.9" y1="104.6" x2="802.9" y2="132.6" stroke="#eeeeee" stroke-width="0.5"/>
<line x1="809.1" y1="104.6" x2="809.1" y2="132.6" stroke="#eeeeee" stroke-width="0.5"/>
<line x1="815.3000000000001" y1="104.6" x2="815.3000000000001" y2="132.6" stroke="#eeeeee" stroke-width="0.5"/>
<rect x="751.4" y="104.6" width="6" height="15.100000000000009" fill="#ec7a3a"/>
<rect x="751.4" y="119.7" width="6" height="12.899999999999991" fill="#1f6a98"/>
<rect x="750.9" y="135.6" width="7" height="1.2" fill="#bdbdbd"/>
<rect x="765.4" y="104.6" width="6" height="15.100000000000009" fill="#ec7a3a"/>
<rect x="765.4" y="119.7" width="6" height="12.899999999999991" fill="#1f6a98"/>
<rect x="764.9" y="135.6" width="7" height="1.2" fill="#bdbdbd"/>
<rect x="779.4" y="104.6" width="6" height="15.100000000000009" fill="#ec7a3a"/>
<rect x="779.4" y="119.7" width="6" height="12.899999999999991" fill="#1f6a98"/>
<rect x="778.9" y="135.6" width="7" height="1.2" fill="#bdbdbd"/>
<rect x="793.4" y="104.6" width="6" height="15.100000000000009" fill="#ec7a3a"/>
<rect x="793.4" y="119.7" width="6" height="12.899999999999991" fill="#1f6a98"/>
<rect x="792.9" y="135.6" width="7" height="1.2" fill="#bdbdbd"/>
<rect x="807.4" y="104.6" width="6" height="15.100000000000009" fill="#ec7a3a"/>
<rect x="807.4" y="119.7" width="6" height="12.899999999999991" fill="#1f6a98"/>
<rect x="806.9" y="135.6" width="7" height="1.2" fill="#bdbdbd"/>
<rect x="769.35" y="139.5" width="20" height="1.2" fill="#bdbdbd"/>
<rect x="831.5" y="95.3" width="80.5" height="48.6" fill="url(#gd)"/>
<rect x="862.75" y="98.5" width="18" height="2.4" fill="#e8e8e8"/>
<line x1="839.5" y1="104.3" x2="908.0" y2="104.3" stroke="#4a4a4a" stroke-width="0.5"/>
<rect x="834.0" y="103.85" width="4" height="0.9" fill="#9a9a9a"/>
<line x1="839.5" y1="107.13" x2="908.0" y2="107.13" stroke="#4a4a4a" stroke-width="0.5"/>
<rect x="834.0" y="106.67999999999999" width="4" height="0.9" fill="#9a9a9a"/>
<line x1="839.5" y1="109.96" x2="908.0" y2="109.96" stroke="#4a4a4a" stroke-width="0.5"/>
<rect x="834.0" y="109.50999999999999" width="4" height="0.9" fill="#9a9a9a"/>
<line x1="839.5" y1="112.78999999999999" x2="908.0" y2="112.78999999999999" stroke="#4a4a4a" stroke-width="0.5"/>
<rect x="834.0" y="112.33999999999999" width="4" height="0.9" fill="#9a9a9a"/>
<line x1="839.5" y1="115.61999999999999" x2="908.0" y2="115.61999999999999" stroke="#4a4a4a" stroke-width="0.5"/>
<rect x="834.0" y="115.16999999999999" width="4" height="0.9" fill="#9a9a9a"/>
<line x1="839.5" y1="118.45" x2="908.0" y2="118.45" stroke="#4a4a4a" stroke-width="0.5"/>
<rect x="834.0" y="118.0" width="4" height="0.9" fill="#9a9a9a"/>
<line x1="839.5" y1="121.28" x2="908.0" y2="121.28" stroke="#4a4a4a" stroke-width="0.5"/>
<rect x="834.0" y="120.83" width="4" height="0.9" fill="#9a9a9a"/>
<line x1="839.5" y1="124.10999999999999" x2="908.0" y2="124.10999999999999" stroke="#4a4a4a" stroke-width="0.5"/>
<rect x="834.0" y="123.65999999999998" width="4" height="0.9" fill="#9a9a9a"/>
<line x1="839.5" y1="126.94" x2="908.0" y2="126.94" stroke="#4a4a4a" stroke-width="0.5"/>
<rect x="834.0" y="126.49" width="4" height="0.9" fill="#9a9a9a"/>
<line x1="839.5" y1="129.76999999999998" x2="908.0" y2="129.76999999999998" stroke="#4a4a4a" stroke-width="0.5"/>
<rect x="834.0" y="129.32" width="4" height="0.9" fill="#9a9a9a"/>
<line x1="839.5" y1="132.6" x2="908.0" y2="132.6" stroke="#4a4a4a" stroke-width="0.5"/>
<rect x="834.0" y="132.15" width="4" height="0.9" fill="#9a9a9a"/>
<rect x="838.9" y="104.3" width="6.6" height="15.400000000000006" fill="#f07c32"/>
<rect x="838.9" y="119.7" width="6.6" height="12.899999999999991" fill="#1f78b0"/>
<rect x="838.6999999999999" y="135.6" width="7" height="1.2" fill="#9a9a9a"/>
<rect x="852.9" y="104.3" width="6.6" height="15.400000000000006" fill="#f07c32"/>
<rect x="852.9" y="119.7" width="6.6" height="12.899999999999991" fill="#1f78b0"/>
<rect x="852.6999999999999" y="135.6" width="7" height="1.2" fill="#9a9a9a"/>
<rect x="866.9" y="104.3" width="6.6" height="15.400000000000006" fill="#f07c32"/>
<rect x="866.9" y="119.7" width="6.6" height="12.899999999999991" fill="#1f78b0"/>
<rect x="866.6999999999999" y="135.6" width="7" height="1.2" fill="#9a9a9a"/>
<rect x="880.9" y="104.3" width="6.6" height="15.400000000000006" fill="#f07c32"/>
<rect x="880.9" y="119.7" width="6.6" height="12.899999999999991" fill="#1f78b0"/>
<rect x="880.6999999999999" y="135.6" width="7" height="1.2" fill="#9a9a9a"/>
<rect x="894.9" y="104.3" width="6.6" height="15.400000000000006" fill="#f07c32"/>
<rect x="894.9" y="119.7" width="6.6" height="12.899999999999991" fill="#1f78b0"/>
<rect x="894.6999999999999" y="135.6" width="7" height="1.2" fill="#9a9a9a"/>
<line x1="837.5" y1="132.9" x2="906.0" y2="132.9" stroke="#9ac8e8" stroke-width="0.8"/>
<rect x="861.75" y="139.5" width="20" height="1.2" fill="#9a9a9a"/>
<rect x="205.5" y="91.5" width="87.5" height="56.5" fill="none" stroke="#9a9a9a" stroke-width="1.6"/>
<rect x="912.5" y="89.5" width="24.5" height="60.5" fill="#262626" rx="3" stroke="#8a8a8a" stroke-width="1"/>
<line x1="920.5" y1="116.3" x2="928" y2="116.3" stroke="#e8e8e8" stroke-width="1.3"/>
<path d="M920.95,117.85 l3.3,3.3 l3.3,-3.3" fill="none" stroke="#e8e8e8" stroke-width="1.4"/>
<rect x="986.6" y="89.6" width="17.8" height="7.8" fill="#1b7ad6"/>
<rect x="976.5" y="97.4" width="10.1" height="14.3" fill="#1b7ad6"/>
<path d="M976.5,97.4 L986.6,89.6 L986.6,97.4 Z" fill="#1b7ad6"/>
<path d="M976.5,104.3 h27.9 M976.5,97.4 h27.9 M986.6,89.6 v22.1 M995.3,89.6 v22.1 M976.5,111.7 h27.9 M1004.4,89.6 v22.1 M976.5,97.4 v14.3 M986.6,89.6 h17.8" fill="none" stroke="#d4d4d4" stroke-width="1.1"/>
<path d="M978.5,97 v-7.4 h7.5" fill="none" stroke="#d4d4d4" stroke-width="1.1"/>
<path d="M975,96.5 L988,86.5 M983.5,85.5 l4.8,0.6 l-0.6,4.8" fill="none" stroke="#d4d4d4" stroke-width="1.1"/>
<text x="990" y="131.5" font-size="12.5" fill="#e8e8e8" text-anchor="middle" textLength="64.3" lengthAdjust="spacingAndGlyphs">Switch Row/</text>
<text x="990" y="147.5" font-size="12.5" fill="#e8e8e8" text-anchor="middle" textLength="41" lengthAdjust="spacingAndGlyphs">Column</text>
<rect x="1034.7" y="89.6" width="18.3" height="14.7" fill="#1b7ad6"/>
<path d="M1034.7,89.6 h27.5 v14.7 M1034.7,89.6 v22.1 h14.7 M1034.7,97.4 h27.5 M1034.7,104.3 h14.7 M1044.4,89.6 v22.1 M1053,89.6 v12" fill="none" stroke="#d4d4d4" stroke-width="1.1"/>
<rect x="1049.4" y="108" width="6" height="8.7" fill="#7a7a7a" stroke="#c8c8c8" stroke-width="0.6"/>
<path d="M1055.4,116.7 v-15.1 h4.5 v15.1" fill="#292929" stroke="#dcdcdc" stroke-width="1.1"/>
<rect x="1060.2" y="103.7" width="4.3" height="13" fill="#1b7ad6" stroke="#9cc8f0" stroke-width="0.5"/>
<text x="1048.7" y="131.5" font-size="12.5" fill="#e8e8e8" text-anchor="middle" textLength="30.4" lengthAdjust="spacingAndGlyphs">Select</text>
<text x="1048" y="147.5" font-size="12.5" fill="#e8e8e8" text-anchor="middle" textLength="24.2" lengthAdjust="spacingAndGlyphs">Data</text>
<text x="1011.7" y="171.5" font-size="11" fill="#d8d8d8" text-anchor="middle" textLength="20.3" lengthAdjust="spacingAndGlyphs">Data</text>
<line x1="1077.5" y1="83" x2="1077.5" y2="175" stroke="#4a4a4a" stroke-width="1"/>
<rect x="1103.3" y="98.2" width="8" height="16.7" fill="#777777" stroke="#bdbdbd" stroke-width="0.8"/>
<path d="M1111.3,114.9 v-27.6 h8.2 v27.6 z" fill="#292929" stroke="#dcdcdc" stroke-width="1.2"/>
<rect x="1119.5" y="92.4" width="8.3" height="22.5" fill="#1b7ad6" stroke="#9cc8f0" stroke-width="0.7"/>
<text x="1116" y="131.5" font-size="12.5" fill="#e8e8e8" text-anchor="middle" textLength="40" lengthAdjust="spacingAndGlyphs">Change</text>
<text x="1116.2" y="147.5" font-size="12.5" fill="#e8e8e8" text-anchor="middle" textLength="56" lengthAdjust="spacingAndGlyphs">Chart Type</text>
<text x="1115.6" y="171.5" font-size="11" fill="#d8d8d8" text-anchor="middle" textLength="21.2" lengthAdjust="spacingAndGlyphs">Type</text>
<line x1="1154.5" y1="83" x2="1154.5" y2="175" stroke="#4a4a4a" stroke-width="1"/>
<path d="M1170.3,88.3 h27.5 v14 M1170.3,88.3 v20.6 h14 M1170.3,95.4 h27.5 M1170.3,102.3 h27.5 M1179.4,88.3 v20.6 M1188.6,88.3 v14 M1170.3,108.9 l2.5,3.7 h10" fill="none" stroke="#dcdcdc" stroke-width="1.1"/>
<rect x="1184.5" y="108.4" width="5" height="8.3" fill="#777777" stroke="#bdbdbd" stroke-width="0.6"/>
<path d="M1189.5,116.7 v-15.1 h5 v15.1" fill="#292929" stroke="#dcdcdc" stroke-width="1.1"/>
<rect x="1194.6" y="104" width="6" height="12.7" fill="#1b7ad6"/>
<text x="1169" y="131.5" font-size="12.5" fill="#e8e8e8" textLength="30" lengthAdjust="spacingAndGlyphs">Move</text>
<text x="1169" y="147.5" font-size="12.5" fill="#e8e8e8" textLength="30" lengthAdjust="spacingAndGlyphs">Chart</text>
<text x="1163.6" y="171.5" font-size="11" fill="#d8d8d8" textLength="42" lengthAdjust="spacingAndGlyphs">Location</text>
<rect x="8.5" y="186.5" width="100.5" height="23" fill="#242424" rx="4" stroke="#474747" stroke-width="1"/>
<text x="13.5" y="203" font-size="13.5" fill="#e6e6e6" textLength="42" lengthAdjust="spacingAndGlyphs">Chart 9</text>
<path d="M94.0,196.2 l4.8,4.8 l4.8,-4.8" fill="none" stroke="#e8e8e8" stroke-width="1.3"/>
<circle cx="120" cy="194" r="1.1" fill="#d8d8d8"/>
<circle cx="120" cy="198" r="1.1" fill="#d8d8d8"/>
<circle cx="120" cy="202" r="1.1" fill="#d8d8d8"/>
<rect x="130.5" y="186.5" width="85" height="23" fill="#242424" rx="4" stroke="#474747" stroke-width="1"/>
<path d="M136.5,192 l12.3,12.3 M148.8,192 l-12.3,12.3" fill="none" stroke="#8a8a8a" stroke-width="1.1"/>
<path d="M158.5,197.5 l6,6 l10.5,-11" fill="none" stroke="#8a8a8a" stroke-width="1.1"/>
<text x="185" y="203.5" font-size="15" fill="#c8c8c8" font-family="Liberation Serif" font-style="italic" textLength="16" lengthAdjust="spacingAndGlyphs">fx</text>
<path d="M204.5,194.2 l4,4 l4,-4" fill="none" stroke="#c8c8c8" stroke-width="1.1"/>
<rect x="220.5" y="186.5" width="1000" height="23" fill="#242424" rx="4" stroke="#474747" stroke-width="1"/>
<text x="231" y="203" font-size="13.4" fill="#e6e6e6" font-family="Liberation Mono" textLength="449" lengthAdjust="spacingAndGlyphs">=SERIES(Sheet1!$C$1,Sheet1!$A$2:$A$6,Sheet1!$C$2:$C$6,2)</text>
<path d="M13,236 L30,219 L30,236 z" fill="#7a7a7a"/>
<line x1="172.5" y1="216" x2="172.5" y2="237.5" stroke="#3a3a3a" stroke-width="1"/>
<line x1="268.3" y1="216" x2="268.3" y2="237.5" stroke="#3a3a3a" stroke-width="1"/>
<line x1="365.7" y1="216" x2="365.7" y2="237.5" stroke="#3a3a3a" stroke-width="1"/>
<line x1="469.2" y1="216" x2="469.2" y2="237.5" stroke="#3a3a3a" stroke-width="1"/>
<line x1="572" y1="216" x2="572" y2="237.5" stroke="#3a3a3a" stroke-width="1"/>
<line x1="675" y1="216" x2="675" y2="237.5" stroke="#3a3a3a" stroke-width="1"/>
<line x1="748.8" y1="216" x2="748.8" y2="237.5" stroke="#3a3a3a" stroke-width="1"/>
<line x1="822" y1="216" x2="822" y2="237.5" stroke="#3a3a3a" stroke-width="1"/>
<line x1="895.5" y1="216" x2="895.5" y2="237.5" stroke="#3a3a3a" stroke-width="1"/>
<line x1="969.5" y1="216" x2="969.5" y2="237.5" stroke="#3a3a3a" stroke-width="1"/>
<line x1="1043" y1="216" x2="1043" y2="237.5" stroke="#3a3a3a" stroke-width="1"/>
<line x1="1117" y1="216" x2="1117" y2="237.5" stroke="#3a3a3a" stroke-width="1"/>
<line x1="1191" y1="216" x2="1191" y2="237.5" stroke="#3a3a3a" stroke-width="1"/>
<text x="102.25" y="232.8" font-size="14" fill="#d6d6d6" text-anchor="middle">A</text>
<text x="220.4" y="232.8" font-size="14" fill="#d6d6d6" text-anchor="middle">B</text>
<text x="317.0" y="232.8" font-size="14" fill="#d6d6d6" text-anchor="middle">C</text>
<text x="417.45" y="232.8" font-size="14" fill="#d6d6d6" text-anchor="middle">D</text>
<text x="520.6" y="232.8" font-size="14" fill="#d6d6d6" text-anchor="middle">E</text>
<text x="623.5" y="232.8" font-size="14" fill="#d6d6d6" text-anchor="middle">F</text>
<text x="711.9" y="232.8" font-size="14" fill="#d6d6d6" text-anchor="middle">G</text>
<text x="785.4" y="232.8" font-size="14" fill="#d6d6d6" text-anchor="middle">H</text>
<text x="858.75" y="232.8" font-size="14" fill="#d6d6d6" text-anchor="middle">I</text>
<text x="932.5" y="232.8" font-size="14" fill="#d6d6d6" text-anchor="middle">J</text>
<text x="1006.25" y="232.8" font-size="14" fill="#d6d6d6" text-anchor="middle">K</text>
<text x="1080.0" y="232.8" font-size="14" fill="#d6d6d6" text-anchor="middle">L</text>
<text x="1154.0" y="232.8" font-size="14" fill="#d6d6d6" text-anchor="middle">M</text>
<rect x="32" y="237.5" width="1168" height="383.5" fill="#ffffff"/>
<rect x="32" y="260.19" width="140.5" height="110.45" fill="#f5f0fc"/>
<rect x="268.3" y="238.1" width="97.4" height="22.09" fill="#fde6e7"/>
<rect x="268.3" y="260.19" width="97.4" height="110.45" fill="#eaf1fb"/>
<line x1="32" y1="260.19" x2="1200" y2="260.19" stroke="#e1e1e1" stroke-width="1"/>
<line x1="32" y1="282.28" x2="1200" y2="282.28" stroke="#e1e1e1" stroke-width="1"/>
<line x1="32" y1="304.37" x2="1200" y2="304.37" stroke="#e1e1e1" stroke-width="1"/>
<line x1="32" y1="326.46" x2="1200" y2="326.46" stroke="#e1e1e1" stroke-width="1"/>
<line x1="32" y1="348.55" x2="1200" y2="348.55" stroke="#e1e1e1" stroke-width="1"/>
<line x1="32" y1="370.64" x2="1200" y2="370.64" stroke="#e1e1e1" stroke-width="1"/>
<line x1="32" y1="392.73" x2="1200" y2="392.73" stroke="#e1e1e1" stroke-width="1"/>
<line x1="32" y1="414.82" x2="1200" y2="414.82" stroke="#e1e1e1" stroke-width="1"/>
<line x1="32" y1="436.90999999999997" x2="1200" y2="436.90999999999997" stroke="#e1e1e1" stroke-width="1"/>
<line x1="32" y1="459.0" x2="1200" y2="459.0" stroke="#e1e1e1" stroke-width="1"/>
<line x1="32" y1="481.09000000000003" x2="1200" y2="481.09000000000003" stroke="#e1e1e1" stroke-width="1"/>
<line x1="32" y1="503.17999999999995" x2="1200" y2="503.17999999999995" stroke="#e1e1e1" stroke-width="1"/>
<line x1="32" y1="525.27" x2="1200" y2="525.27" stroke="#e1e1e1" stroke-width="1"/>
<line x1="32" y1="547.36" x2="1200" y2="547.36" stroke="#e1e1e1" stroke-width="1"/>
<line x1="32" y1="569.45" x2="1200" y2="569.45" stroke="#e1e1e1" stroke-width="1"/>
<line x1="32" y1="591.54" x2="1200" y2="591.54" stroke="#e1e1e1" stroke-width="1"/>
<line x1="32" y1="613.63" x2="1200" y2="613.63" stroke="#e1e1e1" stroke-width="1"/>
<line x1="172.5" y1="237.5" x2="172.5" y2="621" stroke="#e1e1e1" stroke-width="1"/>
<line x1="268.3" y1="237.5" x2="268.3" y2="621" stroke="#e1e1e1" stroke-width="1"/>
<line x1="365.7" y1="237.5" x2="365.7" y2="621" stroke="#e1e1e1" stroke-width="1"/>
<line x1="469.2" y1="237.5" x2="469.2" y2="621" stroke="#e1e1e1" stroke-width="1"/>
<line x1="572" y1="237.5" x2="572" y2="621" stroke="#e1e1e1" stroke-width="1"/>
<line x1="675" y1="237.5" x2="675" y2="621" stroke="#e1e1e1" stroke-width="1"/>
<line x1="748.8" y1="237.5" x2="748.8" y2="621" stroke="#e1e1e1" stroke-width="1"/>
<line x1="822" y1="237.5" x2="822" y2="621" stroke="#e1e1e1" stroke-width="1"/>
<line x1="895.5" y1="237.5" x2="895.5" y2="621" stroke="#e1e1e1" stroke-width="1"/>
<line x1="969.5" y1="237.5" x2="969.5" y2="621" stroke="#e1e1e1" stroke-width="1"/>
<line x1="1043" y1="237.5" x2="1043" y2="621" stroke="#e1e1e1" stroke-width="1"/>
<line x1="1117" y1="237.5" x2="1117" y2="621" stroke="#e1e1e1" stroke-width="1"/>
<line x1="1191" y1="237.5" x2="1191" y2="621" stroke="#e1e1e1" stroke-width="1"/>
<rect x="0" y="237.5" width="32" height="383.5" fill="#0a0a0a"/>
<line x1="0" y1="237.5" x2="31" y2="237.5" stroke="#3a3a3a" stroke-width="1"/>
<line x1="0" y1="260.19" x2="32" y2="260.19" stroke="#3a3a3a" stroke-width="1"/>
<text x="16" y="255.0" font-size="15" fill="#d6d6d6" text-anchor="middle">1</text>
<line x1="0" y1="282.28" x2="32" y2="282.28" stroke="#3a3a3a" stroke-width="1"/>
<text x="16" y="277.09" font-size="15" fill="#d6d6d6" text-anchor="middle">2</text>
<line x1="0" y1="304.37" x2="32" y2="304.37" stroke="#3a3a3a" stroke-width="1"/>
<text x="16" y="299.17999999999995" font-size="15" fill="#d6d6d6" text-anchor="middle">3</text>
<line x1="0" y1="326.46" x2="32" y2="326.46" stroke="#3a3a3a" stroke-width="1"/>
<text x="16" y="321.27" font-size="15" fill="#d6d6d6" text-anchor="middle">4</text>
<line x1="0" y1="348.55" x2="32" y2="348.55" stroke="#3a3a3a" stroke-width="1"/>
<text x="16" y="343.35999999999996" font-size="15" fill="#d6d6d6" text-anchor="middle">5</text>
<line x1="0" y1="370.64" x2="32" y2="370.64" stroke="#3a3a3a" stroke-width="1"/>
<text x="16" y="365.45" font-size="15" fill="#d6d6d6" text-anchor="middle">6</text>
<line x1="0" y1="392.73" x2="32" y2="392.73" stroke="#3a3a3a" stroke-width="1"/>
<text x="16" y="387.53999999999996" font-size="15" fill="#d6d6d6" text-anchor="middle">7</text>
<line x1="0" y1="414.82" x2="32" y2="414.82" stroke="#3a3a3a" stroke-width="1"/>
<text x="16" y="409.63" font-size="15" fill="#d6d6d6" text-anchor="middle">8</text>
<line x1="0" y1="436.90999999999997" x2="32" y2="436.90999999999997" stroke="#3a3a3a" stroke-width="1"/>
<text x="16" y="431.71999999999997" font-size="15" fill="#d6d6d6" text-anchor="middle">9</text>
<line x1="0" y1="459.0" x2="32" y2="459.0" stroke="#3a3a3a" stroke-width="1"/>
<text x="16" y="453.80999999999995" font-size="15" fill="#d6d6d6" text-anchor="middle">10</text>
<line x1="0" y1="481.09000000000003" x2="32" y2="481.09000000000003" stroke="#3a3a3a" stroke-width="1"/>
<text x="16" y="475.9" font-size="15" fill="#d6d6d6" text-anchor="middle">11</text>
<line x1="0" y1="503.17999999999995" x2="32" y2="503.17999999999995" stroke="#3a3a3a" stroke-width="1"/>
<text x="16" y="497.99" font-size="15" fill="#d6d6d6" text-anchor="middle">12</text>
<line x1="0" y1="525.27" x2="32" y2="525.27" stroke="#3a3a3a" stroke-width="1"/>
<text x="16" y="520.0799999999999" font-size="15" fill="#d6d6d6" text-anchor="middle">13</text>
<line x1="0" y1="547.36" x2="32" y2="547.36" stroke="#3a3a3a" stroke-width="1"/>
<text x="16" y="542.17" font-size="15" fill="#d6d6d6" text-anchor="middle">14</text>
<line x1="0" y1="569.45" x2="32" y2="569.45" stroke="#3a3a3a" stroke-width="1"/>
<text x="16" y="564.26" font-size="15" fill="#d6d6d6" text-anchor="middle">15</text>
<line x1="0" y1="591.54" x2="32" y2="591.54" stroke="#3a3a3a" stroke-width="1"/>
<text x="16" y="586.35" font-size="15" fill="#d6d6d6" text-anchor="middle">16</text>
<line x1="0" y1="613.63" x2="32" y2="613.63" stroke="#3a3a3a" stroke-width="1"/>
<text x="16" y="608.4399999999999" font-size="15" fill="#d6d6d6" text-anchor="middle">17</text>
<line x1="0" y1="635.72" x2="32" y2="635.72" stroke="#3a3a3a" stroke-width="1"/>
<text x="16" y="630.53" font-size="15" fill="#d6d6d6" text-anchor="middle">18</text>
<rect x="32.5" y="260.19" width="140" height="110.45" fill="none" stroke="#a98be6" stroke-width="1.6"/>
<rect x="268.5" y="260.19" width="97.2" height="110.45" fill="none" stroke="#6b9be0" stroke-width="1.6"/>
<line x1="268.5" y1="238.1" x2="268.5" y2="260.19" stroke="#f2a3a8" stroke-width="1.4"/>
<line x1="365.7" y1="238.1" x2="365.7" y2="260.19" stroke="#f2a3a8" stroke-width="1.4"/>
<rect x="170.7" y="258.39" width="3.6" height="3.6" fill="#a98be6"/>
<rect x="170.7" y="368.84" width="3.6" height="3.6" fill="#a98be6"/>
<rect x="30.7" y="368.84" width="3.6" height="3.6" fill="#a98be6"/>
<rect x="266.7" y="258.39" width="3.6" height="3.6" fill="#6b9be0"/>
<rect x="363.9" y="258.39" width="3.6" height="3.6" fill="#6b9be0"/>
<rect x="266.7" y="368.84" width="3.6" height="3.6" fill="#6b9be0"/>
<rect x="363.9" y="368.84" width="3.6" height="3.6" fill="#6b9be0"/>
<text x="102" y="255.2" font-size="15" fill="#262626" font-weight="bold" text-anchor="middle" textLength="67.4" lengthAdjust="spacingAndGlyphs">Sản phẩm</text>
<text x="220.8" y="255.2" font-size="15" fill="#262626" font-weight="bold" text-anchor="middle" textLength="73" lengthAdjust="spacingAndGlyphs">Năm trước</text>
<text x="317" y="255.2" font-size="15" fill="#262626" font-weight="bold" text-anchor="middle" textLength="59.4" lengthAdjust="spacingAndGlyphs">Năm nay</text>
<text x="35.4" y="276.89" font-size="15" fill="#262626" textLength="78" lengthAdjust="spacingAndGlyphs">Sản phẩm 1</text>
<text x="265.5" y="276.89" font-size="15" fill="#262626" text-anchor="end">10%</text>
<text x="361.8" y="276.89" font-size="15" fill="#262626" text-anchor="end">10%</text>
<text x="35.4" y="298.97999999999996" font-size="15" fill="#262626" textLength="78" lengthAdjust="spacingAndGlyphs">Sản phẩm 2</text>
<text x="265.5" y="298.97999999999996" font-size="15" fill="#262626" text-anchor="end">30%</text>
<text x="361.8" y="298.97999999999996" font-size="15" fill="#262626" text-anchor="end">30%</text>
<text x="35.4" y="321.07" font-size="15" fill="#262626" textLength="78" lengthAdjust="spacingAndGlyphs">Sản phẩm 3</text>
<text x="265.5" y="321.07" font-size="15" fill="#262626" text-anchor="end">30%</text>
<text x="361.8" y="321.07" font-size="15" fill="#262626" text-anchor="end">30%</text>
<text x="35.4" y="343.15999999999997" font-size="15" fill="#262626" textLength="78" lengthAdjust="spacingAndGlyphs">Sản phẩm 4</text>
<text x="265.5" y="343.15999999999997" font-size="15" fill="#262626" text-anchor="end">30%</text>
<text x="361.8" y="343.15999999999997" font-size="15" fill="#262626" text-anchor="end">30%</text>
<text x="35.4" y="365.45" font-size="15" fill="#262626" font-weight="bold" textLength="69" lengthAdjust="spacingAndGlyphs">Tổng cộng</text>
<text x="265.5" y="365.45" font-size="15" fill="#262626" font-weight="bold" text-anchor="end" textLength="38" lengthAdjust="spacingAndGlyphs">100%</text>
<text x="361.8" y="365.45" font-size="15" fill="#262626" font-weight="bold" text-anchor="end" textLength="37.5" lengthAdjust="spacingAndGlyphs">100%</text>
<rect x="371" y="262.5" width="554" height="332.70000000000005" fill="#ffffff" stroke="#8c8c8c" stroke-width="1.4"/>
<text x="648" y="294" font-size="18.7" fill="#595959" text-anchor="middle" textLength="89" lengthAdjust="spacingAndGlyphs">Chart Title</text>
<line x1="425" y1="318.8" x2="908" y2="318.8" stroke="#d9d9d9" stroke-width="1"/>
<text x="411.8" y="322.40000000000003" font-size="12.2" fill="#595959" text-anchor="end">100%</text>
<line x1="425" y1="339.32" x2="908" y2="339.32" stroke="#d9d9d9" stroke-width="1"/>
<text x="411.8" y="342.92" font-size="12.2" fill="#595959" text-anchor="end">90%</text>
<line x1="425" y1="359.84000000000003" x2="908" y2="359.84000000000003" stroke="#d9d9d9" stroke-width="1"/>
<text x="411.8" y="363.44000000000005" font-size="12.2" fill="#595959" text-anchor="end">80%</text>
<line x1="425" y1="380.36" x2="908" y2="380.36" stroke="#d9d9d9" stroke-width="1"/>
<text x="411.8" y="383.96000000000004" font-size="12.2" fill="#595959" text-anchor="end">70%</text>
<line x1="425" y1="400.88" x2="908" y2="400.88" stroke="#d9d9d9" stroke-width="1"/>
<text x="411.8" y="404.48" font-size="12.2" fill="#595959" text-anchor="end">60%</text>
<line x1="425" y1="421.4" x2="908" y2="421.4" stroke="#d9d9d9" stroke-width="1"/>
<text x="411.8" y="425.0" font-size="12.2" fill="#595959" text-anchor="end">50%</text>
<line x1="425" y1="441.92" x2="908" y2="441.92" stroke="#d9d9d9" stroke-width="1"/>
<text x="411.8" y="445.52000000000004" font-size="12.2" fill="#595959" text-anchor="end">40%</text>
<line x1="425" y1="462.44" x2="908" y2="462.44" stroke="#d9d9d9" stroke-width="1"/>
<text x="411.8" y="466.04" font-size="12.2" fill="#595959" text-anchor="end">30%</text>
<line x1="425" y1="482.96000000000004" x2="908" y2="482.96000000000004" stroke="#d9d9d9" stroke-width="1"/>
<text x="411.8" y="486.56000000000006" font-size="12.2" fill="#595959" text-anchor="end">20%</text>
<line x1="425" y1="503.48" x2="908" y2="503.48" stroke="#d9d9d9" stroke-width="1"/>
<text x="411.8" y="507.08000000000004" font-size="12.2" fill="#595959" text-anchor="end">10%</text>
<line x1="425" y1="524.0" x2="908" y2="524.0" stroke="#d9d9d9" stroke-width="1"/>
<text x="411.8" y="527.6" font-size="12.2" fill="#595959" text-anchor="end">0%</text>
<rect x="454.0" y="318.8" width="38.8" height="102.59999999999997" fill="#e97132"/>
<rect x="454.0" y="421.4" width="38.8" height="102.60000000000002" fill="#156082"/>
<rect x="550.65" y="318.8" width="38.8" height="102.59999999999997" fill="#e97132"/>
<rect x="550.65" y="421.4" width="38.8" height="102.60000000000002" fill="#156082"/>
<rect x="647.3" y="318.8" width="38.8" height="102.59999999999997" fill="#e97132"/>
<rect x="647.3" y="421.4" width="38.8" height="102.60000000000002" fill="#156082"/>
<rect x="743.95" y="318.8" width="38.8" height="102.59999999999997" fill="#e97132"/>
<rect x="743.95" y="421.4" width="38.8" height="102.60000000000002" fill="#156082"/>
<rect x="840.6" y="318.8" width="38.8" height="102.59999999999997" fill="#e97132"/>
<rect x="840.6" y="421.4" width="38.8" height="102.60000000000002" fill="#156082"/>
<text x="473.4" y="545.3" font-size="13.4" fill="#595959" text-anchor="middle" textLength="64" lengthAdjust="spacingAndGlyphs">Sản phẩm 1</text>
<text x="570.05" y="545.3" font-size="13.4" fill="#595959" text-anchor="middle" textLength="64" lengthAdjust="spacingAndGlyphs">Sản phẩm 2</text>
<text x="666.6999999999999" y="545.3" font-size="13.4" fill="#595959" text-anchor="middle" textLength="64" lengthAdjust="spacingAndGlyphs">Sản phẩm 3</text>
<rect x="575.5" y="569.5" width="6.5" height="6.5" fill="#156082"/>
<text x="586" y="576.3" font-size="13.5" fill="#595959" textLength="66.5" lengthAdjust="spacingAndGlyphs">Năm trước</text>
<circle cx="454.0" cy="318.8" r="3" fill="#ffffff" stroke="#6ea6e0" stroke-width="1.2"/>
<circle cx="492.8" cy="318.8" r="3" fill="#ffffff" stroke="#6ea6e0" stroke-width="1.2"/>
<circle cx="454.0" cy="421.4" r="3" fill="#ffffff" stroke="#6ea6e0" stroke-width="1.2"/>
<circle cx="492.8" cy="421.4" r="3" fill="#ffffff" stroke="#6ea6e0" stroke-width="1.2"/>
<circle cx="550.65" cy="318.8" r="3" fill="#ffffff" stroke="#6ea6e0" stroke-width="1.2"/>
<circle cx="589.4499999999999" cy="318.8" r="3" fill="#ffffff" stroke="#6ea6e0" stroke-width="1.2"/>
<circle cx="550.65" cy="421.4" r="3" fill="#ffffff" stroke="#6ea6e0" stroke-width="1.2"/>
<circle cx="589.4499999999999" cy="421.4" r="3" fill="#ffffff" stroke="#6ea6e0" stroke-width="1.2"/>
<circle cx="647.3" cy="318.8" r="3" fill="#ffffff" stroke="#6ea6e0" stroke-width="1.2"/>
<circle cx="686.0999999999999" cy="318.8" r="3" fill="#ffffff" stroke="#6ea6e0" stroke-width="1.2"/>
<circle cx="647.3" cy="421.4" r="3" fill="#ffffff" stroke="#6ea6e0" stroke-width="1.2"/>
<circle cx="686.0999999999999" cy="421.4" r="3" fill="#ffffff" stroke="#6ea6e0" stroke-width="1.2"/>
<circle cx="743.95" cy="318.8" r="3" fill="#ffffff" stroke="#6ea6e0" stroke-width="1.2"/>
<circle cx="782.75" cy="318.8" r="3" fill="#ffffff" stroke="#6ea6e0" stroke-width="1.2"/>
<circle cx="743.95" cy="421.4" r="3" fill="#ffffff" stroke="#6ea6e0" stroke-width="1.2"/>
<circle cx="782.75" cy="421.4" r="3" fill="#ffffff" stroke="#6ea6e0" stroke-width="1.2"/>
<circle cx="840.6" cy="318.8" r="3" fill="#ffffff" stroke="#6ea6e0" stroke-width="1.2"/>
<circle cx="879.4" cy="318.8" r="3" fill="#ffffff" stroke="#6ea6e0" stroke-width="1.2"/>
<circle cx="840.6" cy="421.4" r="3" fill="#ffffff" stroke="#6ea6e0" stroke-width="1.2"/>
<circle cx="879.4" cy="421.4" r="3" fill="#ffffff" stroke="#6ea6e0" stroke-width="1.2"/>
<circle cx="371" cy="262.5" r="5" fill="#ffffff" stroke="#6b6b6b" stroke-width="1.8"/>
<circle cx="648" cy="262.5" r="5" fill="#ffffff" stroke="#6b6b6b" stroke-width="1.8"/>
<circle cx="925" cy="262.5" r="5" fill="#ffffff" stroke="#6b6b6b" stroke-width="1.8"/>
<circle cx="371" cy="429" r="5" fill="#ffffff" stroke="#6b6b6b" stroke-width="1.8"/>
<circle cx="925" cy="429" r="5" fill="#ffffff" stroke="#6b6b6b" stroke-width="1.8"/>
<circle cx="371" cy="595.2" r="5" fill="#ffffff" stroke="#6b6b6b" stroke-width="1.8"/>
<circle cx="647.5" cy="595.2" r="5" fill="#ffffff" stroke="#6b6b6b" stroke-width="1.8"/>
<circle cx="925" cy="595.2" r="5" fill="#ffffff" stroke="#6b6b6b" stroke-width="1.8"/>
<rect x="937.5" y="262.5" width="27.5" height="27.5" fill="#ffffff" stroke="#a6a6a6" stroke-width="1"/>
<rect x="937.5" y="300.5" width="27.5" height="27.5" fill="#ffffff" stroke="#a6a6a6" stroke-width="1"/>
<rect x="937.5" y="338.5" width="27.5" height="27.5" fill="#ffffff" stroke="#a6a6a6" stroke-width="1"/>
<line x1="950.3" y1="264.5" x2="950.3" y2="286.2" stroke="#2fa855" stroke-width="1.2"/>
<line x1="940" y1="275.2" x2="960.7" y2="275.2" stroke="#2fa855" stroke-width="1.2"/>
<path d="M961.2,305 l-11,11.5" fill="none" stroke="#5a5a5a" stroke-width="3.4" stroke-linecap="round"/>
<path d="M961.2,305 l-11,11.5" fill="none" stroke="#f2f2f2" stroke-width="1.4" stroke-linecap="round"/>
<path d="M950.8,315.6 c-1.5,-1.5 -4.5,-1 -5.5,1.5 c-0.7,2 -1.7,4 -4.3,5 c3,1.2 7.8,0.6 9.8,-2 c1.2,-1.5 1.2,-3.2 0,-4.5 z" fill="#5aa6e8" stroke="#3c7fc0" stroke-width="0.6"/>
<path d="M941.5,343.5 h19 l-7,8.5 v10 h-5 v-10 z" fill="none" stroke="#595959" stroke-width="1.2"/>
<rect x="438.3" y="303.3" width="72.2" height="126.5" fill="none" stroke="#ec2f33" stroke-width="4.2"/>
<path d="M400.2,234.5 L431.6,234.5 L430.6,243.6 L410.8,243.6 L410.2,252.3 C412.5,251.5 415,251 417.5,251 C427.5,251 434.2,257.5 434.2,267 C434.2,277 426.5,283.7 415,283.7 C407.5,283.7 400,281.2 395.5,277.8 L400.2,269.4 C404,272.5 409.5,274.8 414.5,274.8 C420,274.8 422.9,271.8 422.9,268 C422.9,264 419.5,261.5 413.5,261.5 L398.6,261.5 Z" fill="#ef2b2f"/>
<path d="M640.3,500.3 C636,499.2 631,498.8 626,498.8 C611,498.8 602.2,510 602.2,527 C602.2,540 610.5,548.7 622.5,548.7 C634,548.7 643,540 643,529 C643,518.5 635,512.5 626,512.5 C623,512.5 620.5,513 618.5,514 C621,511 626,509.7 631,509.7 L637,509.9 Z M623.2,521.1 C628,521.1 632,525.3 632,530.7 C632,536 628,540.3 623.2,540.3 C618.4,540.3 614.4,536 614.4,530.7 C614.4,525.3 618.4,521.1 623.2,521.1 Z" fill="#ef2b2f" fill-rule="evenodd"/>
<path d="M998,432 L1037,432 L1037,441.5 L1018.7,480.7 L1006.7,480.7 L1022.7,441.3 L1007.8,441.3 L1007.8,449.3 L998,449.3 Z" fill="#ef2b2f"/>
<g filter="url(#sh)">
<rect x="664" y="278" width="178.5" height="62" fill="#2b2b2b" rx="5" stroke="#3e3e3e" stroke-width="1"/>
<rect x="664" y="357.5" width="203.5" height="238.5" fill="#2b2b2b" rx="5" stroke="#3e3e3e" stroke-width="1"/>
<rect x="868.5" y="510" width="155" height="59" fill="#2b2b2b" rx="5" stroke="#3e3e3e" stroke-width="1"/>
</g>
<path d="M685.3,287.8 L679.9,292.4 L685.6,298.3 L691.3,292.6" fill="none" stroke="#e0e0e0" stroke-width="1.3"/>
<path d="M685.8,290.5 v-6 a1.4,1.4 0 0 1 2.8,0 v6.5" fill="none" stroke="#e0e0e0" stroke-width="1.2"/>
<path d="M690.2,289.3 c1.2,-1.6 4.2,-1.6 4.6,0.8 v8" fill="none" stroke="#5aa0e6" stroke-width="1.5"/>
<rect x="675.7" y="300.8" width="24.2" height="6" fill="#e97132"/>
<path d="M701.1,293.3 l2.4,2.4 l2.4,-2.4" fill="none" stroke="#e8e8e8" stroke-width="1.2"/>
<text x="686.7" y="325" font-size="12.5" fill="#e8e8e8" text-anchor="middle" textLength="13.5" lengthAdjust="spacingAndGlyphs">Fill</text>
<path d="M734.8,284.8 h-15.2 v14.6 h5.5" fill="none" stroke="#d8d8d8" stroke-width="1.3"/>
<path d="M727.2,298.8 l1.2,-4.4 l10,-10 a2.1,2.1 0 0 1 3,3 l-10,10 z" fill="#1e3550" stroke="#5aa0e6" stroke-width="1.4"/>
<rect x="718.8" y="300.8" width="23.8" height="6" fill="#156082"/>
<path d="M744.8000000000001,293.3 l2.4,2.4 l2.4,-2.4" fill="none" stroke="#e8e8e8" stroke-width="1.2"/>
<text x="729.5" y="325" font-size="12.5" fill="#e8e8e8" text-anchor="middle" textLength="34.3" lengthAdjust="spacingAndGlyphs">Outline</text>
<rect x="753.8" y="296.8" width="86" height="23" fill="#262626" rx="3" stroke="#4a4a4a" stroke-width="1"/>
<text x="756" y="313" font-size="11.5" fill="#e8e8e8" textLength="71" lengthAdjust="spacingAndGlyphs">Series &quot;Năm na</text>
<path d="M831.6,308.3 l2.4,2.4 l2.4,-2.4" fill="none" stroke="#e8e8e8" stroke-width="1.2"/>
<line x1="696" y1="417.5" x2="866" y2="417.5" stroke="#474747" stroke-width="1"/>
<line x1="696" y1="507.5" x2="866" y2="507.5" stroke="#474747" stroke-width="1"/>
<text x="701.2" y="377.2" font-size="13" fill="#ececec" textLength="32.4" lengthAdjust="spacingAndGlyphs">Delete</text>
<line x1="701.2" y1="379.4" x2="709.2943956570334" y2="379.4" stroke="#ececec" stroke-width="0.9"/>
<text x="701.2" y="406.6" font-size="13" fill="#ececec" textLength="107.8" lengthAdjust="spacingAndGlyphs">Reset to Match Style</text>
<line x1="757.6925603848623" y1="408.8" x2="764.1908136636124" y2="408.8" stroke="#ececec" stroke-width="0.9"/>
<text x="701.2" y="438.3" font-size="13" fill="#ececec" textLength="143" lengthAdjust="spacingAndGlyphs">Change Series Chart Type...</text>
<line x1="822.1471560080473" y1="440.5" x2="828.4502103273792" y2="440.5" stroke="#ececec" stroke-width="0.9"/>
<text x="701.2" y="467.7" font-size="13" fill="#ececec" textLength="66.6" lengthAdjust="spacingAndGlyphs">Select Data...</text>
<line x1="708.6000948255978" y1="469.9" x2="714.770396473513" y2="469.9" stroke="#ececec" stroke-width="0.9"/>
<text x="701.2" y="496.5" font-size="13" fill="#707070" textLength="77" lengthAdjust="spacingAndGlyphs">3-D Rotation...</text>
<line x1="723.7623762139978" y1="498.7" x2="732.387140573174" y2="498.7" stroke="#707070" stroke-width="0.9"/>
<rect x="667.2" y="511" width="178.6" height="26.2" fill="#3d3d3d"/>
<rect x="848" y="510" width="18.8" height="28" fill="#202020"/>
<path d="M853.5,519 l4.5,4.7 l-4.5,4.7" fill="none" stroke="#e8e8e8" stroke-width="1.4"/>
<text x="701.2" y="528.4" font-size="13" fill="#ececec" textLength="87" lengthAdjust="spacingAndGlyphs">Add Data Labels</text>
<line x1="766.6145001716551" y1="530.6" x2="773.1583034237384" y2="530.6" stroke="#ececec" stroke-width="0.9"/>
<text x="701.2" y="558.3" font-size="13" fill="#707070" textLength="82.4" lengthAdjust="spacingAndGlyphs">Add Trendline...</text>
<line x1="732.5057179161373" y1="560.5" x2="736.4130657669895" y2="560.5" stroke="#707070" stroke-width="0.9"/>
<text x="701.2" y="587.6" font-size="13" fill="#ececec" textLength="109" lengthAdjust="spacingAndGlyphs">Format Data Series...</text>
<line x1="701.2" y1="589.8000000000001" x2="708.2065000242841" y2="589.8000000000001" stroke="#ececec" stroke-width="0.9"/>
<path d="M682,391.5 h10 v18 h-14 v-9" fill="none" stroke="#d8d8d8" stroke-width="1.1"/>
<path d="M677,392 l3,-3 M677,392 l3,3 M677,392 h5 c2,0 3,1.5 3,3.5" fill="none" stroke="#5aa0e6" stroke-width="1.2"/>
<path d="M682,402 h5 M682,404.5 h3" fill="none" stroke="#d8d8d8" stroke-width="0.9"/>
<rect x="676.3" y="432" width="4.7" height="8" fill="#7a7a7a"/>
<path d="M681.6,440 v-14.5 h5.6 v14.5" fill="#2b2b2b" stroke="#d8d8d8" stroke-width="1.1"/>
<rect x="687.8" y="427.2" width="4.8" height="12.8" fill="#1b7ad6"/>
<rect x="676.5" y="454.5" width="11" height="10" fill="#1b7ad6"/>
<path d="M676.5,454.5 h16 v7 M676.5,454.5 v14.5 h10 M676.5,459.5 h16 M676.5,464.5 h10 M681.5,454.5 v14.5 M686.5,454.5 v14.5" fill="none" stroke="#d8d8d8" stroke-width="0.9"/>
<path d="M687.5,469.5 v-8 h2.5 v8" fill="#2b2b2b" stroke="#d8d8d8" stroke-width="0.8"/>
<rect x="689.8" y="460" width="3" height="9.5" fill="#1b7ad6"/>
<path d="M677.3,486.3 l2.5,-2.2 h11.3 v12.3 l-2.5,2.3 h-11.3 z M677.3,486.3 h11.3 v12.4 M688.6,486.3 l2.5,-2.2" fill="none" stroke="#747474" stroke-width="1.3"/>
<path d="M678,584 l4,-6 l5,5 l-4,6 z" fill="none" stroke="#d8d8d8" stroke-width="1.1"/>
<path d="M684,590 l8,-8" fill="none" stroke="#5aa0e6" stroke-width="2"/>
<path d="M680,589 c0,2 2,3 4,2" fill="none" stroke="#5aa0e6" stroke-width="1.2"/>
<rect x="892.6" y="511" width="122" height="31" fill="#222222"/>
<text x="905" y="529.2" font-size="13" fill="#ececec" textLength="86.2" lengthAdjust="spacingAndGlyphs">Add Data Labels</text>
<line x1="969.8129875263985" y1="531.4000000000001" x2="976.2966178750144" y2="531.4000000000001" stroke="#ececec" stroke-width="0.9"/>
<text x="905" y="558.5" font-size="13" fill="#ececec" textLength="96" lengthAdjust="spacingAndGlyphs">Add Data Callouts</text>
<line x1="985.1113178916024" y1="560.7" x2="991.7354195894294" y2="560.7" stroke="#ececec" stroke-width="0.9"/>
<rect x="667.2" y="511" width="178.6" height="26.2" fill="none" stroke="#ef2b2f" stroke-width="4.4"/>
<rect x="892.6" y="511" width="122" height="31" fill="none" stroke="#ef2b2f" stroke-width="4.4"/>
<rect x="0" y="621" width="1200" height="31" fill="#0a0a0a"/>
<path d="M29.5,631.5 l-5,4.8 l5,4.8" fill="none" stroke="#a8a8a8" stroke-width="1.3"/>
<path d="M56,631.5 l5,4.8 l-5,4.8" fill="none" stroke="#a8a8a8" stroke-width="1.3"/>
<path d="M105,621 h70 a6,6 0 0 0 -6,6 v17.5 a4.5,4.5 0 0 1 -4.5,4.5 h-49 a4.5,4.5 0 0 1 -4.5,-4.5 v-17.5 a6,6 0 0 0 -6,-6 z" fill="#ffffff"/>
<text x="119.5" y="639.5" font-size="13.5" fill="#303030" textLength="40.5" lengthAdjust="spacingAndGlyphs">Sheet1</text>
<rect x="119.5" y="644.3" width="41" height="2.2" fill="#1f7a45"/>
<text x="186" y="642.5" font-size="13.5" fill="#e6e6e6" textLength="42" lengthAdjust="spacingAndGlyphs">Sheet2</text>
<line x1="173.5" y1="628" x2="173.5" y2="646" stroke="#5a5a5a" stroke-width="1"/>
<line x1="241.8" y1="628" x2="241.8" y2="646" stroke="#5a5a5a" stroke-width="1"/>
<line x1="283.8" y1="636.5" x2="295" y2="636.5" stroke="#d0d0d0" stroke-width="1.2"/>
<line x1="289.4" y1="631" x2="289.4" y2="642" stroke="#d0d0d0" stroke-width="1.2"/>
<circle cx="774.5" cy="633" r="1.1" fill="#d0d0d0"/>
<circle cx="774.5" cy="637" r="1.1" fill="#d0d0d0"/>
<circle cx="774.5" cy="641" r="1.1" fill="#d0d0d0"/>
<rect x="789" y="628.5" width="420" height="16" fill="#131313" rx="8"/>
<path d="M803.2,632 v9 l-6.8,-4.5 z" fill="#bdbdbd"/>
<rect x="808" y="632.4" width="400" height="7.6" fill="#a3a3a3" rx="3.8"/>
<rect x="0" y="652.5" width="1200" height="23" fill="#161616"/>
<line x1="0" y1="653.3" x2="1200" y2="653.3" stroke="#242424" stroke-width="1.3"/>
<text x="11.3" y="669.3" font-size="11.5" fill="#cfcfcf" textLength="28.2" lengthAdjust="spacingAndGlyphs">Ready</text>
<circle cx="64.5" cy="659.3" r="2.2" fill="none" stroke="#d8d8d8" stroke-width="1.1"/>
<path d="M59.5,659.5 c1,2.5 2.5,3.3 4,3.6 v3.5 l-2.8,4.3 M69.5,659.5 c-1,2.5 -2.5,3.3 -4,3.6 v3" fill="none" stroke="#d8d8d8" stroke-width="1.1"/>
<path d="M67.5,666.5 l5,5 M72.5,666.5 l-5,5" fill="none" stroke="#d8d8d8" stroke-width="1.1"/>
<text x="77.5" y="669.3" font-size="11.5" fill="#e8e8e8" font-weight="bold" textLength="125" lengthAdjust="spacingAndGlyphs">Accessibility: Investigate</text>
<text x="798.5" y="668.5" font-size="11.5" fill="#d6d6d6" textLength="56.5" lengthAdjust="spacingAndGlyphs">Average: 0.4</text>
<text x="876.5" y="668.5" font-size="11.5" fill="#d6d6d6" textLength="44.5" lengthAdjust="spacingAndGlyphs">Count: 18</text>
<text x="936.5" y="668.5" font-size="11.5" fill="#d6d6d6" textLength="32.5" lengthAdjust="spacingAndGlyphs">Sum: 4</text>
<rect x="989" y="652" width="38.5" height="23" fill="#2e2e2e"/>
<path d="M1000.5,657.5 h13 v12 h-13 z M1000.5,661.5 h13 M1000.5,665.5 h13 M1004.8,657.5 v12 M1009.2,657.5 v12" fill="none" stroke="#e0e0e0" stroke-width="1"/>
<path d="M1040.5,657.5 h14.5 v12.5 h-14.5 z M1043.8,659.8 h8 v8 h-8 z M1045.5,662.3 h4.5 M1045.5,664.8 h4.5" fill="none" stroke="#d4d4d4" stroke-width="1.1"/>
<path d="M1080.5,657.5 h14.5 v12.5 h-14.5 z M1084.3,657.5 v6 M1089.5,657.5 v6 h5.5 M1080.5,663.5 h9" fill="none" stroke="#d4d4d4" stroke-width="1.1"/>
<line x1="1113" y1="663.6" x2="1121.3" y2="663.6" stroke="#c8c8c8" stroke-width="1.2"/>
<line x1="1126.8" y1="664" x2="1200" y2="664" stroke="#9a9a9a" stroke-width="1.3"/>
<rect x="1175.5" y="658.2" width="5.5" height="11" fill="#bdbdbd" rx="1.2"/>
</svg>
</body></html>
